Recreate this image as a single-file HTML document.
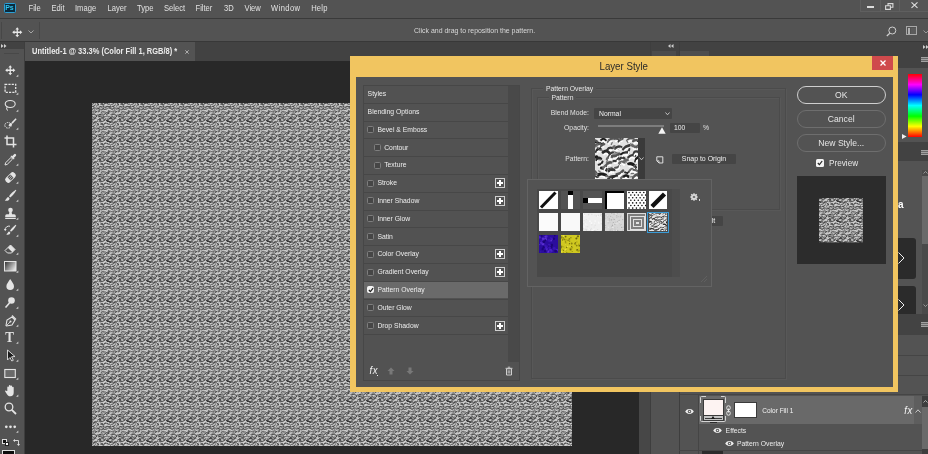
<!DOCTYPE html><html><head><meta charset="utf-8"><title>Layer Style</title><style>
*{box-sizing:border-box;margin:0;padding:0}
html,body{width:928px;height:454px;overflow:hidden;background:#282828}
body{position:relative;font-family:"Liberation Sans",sans-serif;font-size:7px;color:#dcdcdc;line-height:1}
.a{position:absolute}
.t{position:absolute;white-space:nowrap;line-height:10px;height:10px;transform:scaleY(1.12);transform-origin:50% 55%}
svg{position:absolute;overflow:visible}
.row{position:absolute;left:363px;width:145px;height:17px;background:#4f4f4f}
.cb{position:absolute;width:7px;height:7px;border:1px solid #7e7e7e;border-radius:1.5px;background:#464646}
.plus{position:absolute;left:495px;width:10px;height:10px;border:1px solid #cfcfcf}
.plus:before{content:"";position:absolute;left:1px;top:3px;width:6px;height:2px;background:#fff}
.plus:after{content:"";position:absolute;left:3px;top:1px;width:2px;height:6px;background:#fff}
.btn{position:absolute;left:796.5px;width:89.5px;height:18px;border-radius:9px;border:1px solid #6e6e6e;text-align:center;font-size:8.6px;line-height:16px;color:#e6e6e6}
.sw{position:absolute;width:18.5px;height:18px;background:#fff;overflow:hidden}
</style></head><body><div id="all" style="position:absolute;left:0;top:0;width:928px;height:454px;will-change:transform">
<svg width="0" height="0" style="left:0;top:0"><defs>
<filter id="soft" x="0" y="0" width="1" height="1"><feGaussianBlur stdDeviation="0.28"/></filter>
<g id="tile"><rect x="-1" y="-1" width="22" height="22" fill="#c6c6c6"/><path d="M-0.1 0.7Q0.9 1.4 1.9 0.7" stroke="#383838" stroke-width="0.9" fill="none" stroke-linecap="round"/><path d="M-0.1 20.7Q0.9 21.4 1.9 20.7" stroke="#383838" stroke-width="0.9" fill="none" stroke-linecap="round"/><path d="M19.9 0.7Q20.9 1.4 21.9 0.7" stroke="#383838" stroke-width="0.9" fill="none" stroke-linecap="round"/><path d="M19.9 20.7Q20.9 21.4 21.9 20.7" stroke="#383838" stroke-width="0.9" fill="none" stroke-linecap="round"/><path d="M-0.3 2.0Q0.4 2.6 1.1 2.0" stroke="#d6d6d6" stroke-width="0.8" fill="none" stroke-linecap="round"/><path d="M-0.3 22.0Q0.4 22.6 1.1 22.0" stroke="#d6d6d6" stroke-width="0.8" fill="none" stroke-linecap="round"/><path d="M19.7 2.0Q20.4 2.6 21.1 2.0" stroke="#d6d6d6" stroke-width="0.8" fill="none" stroke-linecap="round"/><path d="M19.7 22.0Q20.4 22.6 21.1 22.0" stroke="#d6d6d6" stroke-width="0.8" fill="none" stroke-linecap="round"/><path d="M1.5 3.9Q1.9 2.6 3.2 2.3" stroke="#383838" stroke-width="1.1" fill="none" stroke-linecap="round"/><path d="M1.5 23.9Q1.9 22.6 3.2 22.3" stroke="#383838" stroke-width="1.1" fill="none" stroke-linecap="round"/><path d="M21.5 3.9Q21.9 2.6 23.2 2.3" stroke="#383838" stroke-width="1.1" fill="none" stroke-linecap="round"/><path d="M21.5 23.9Q21.9 22.6 23.2 22.3" stroke="#383838" stroke-width="1.1" fill="none" stroke-linecap="round"/><path d="M1.3 4.9Q1.4 3.9 2.5 3.8" stroke="#d6d6d6" stroke-width="0.8" fill="none" stroke-linecap="round"/><path d="M21.3 4.9Q21.4 3.9 22.5 3.8" stroke="#d6d6d6" stroke-width="0.8" fill="none" stroke-linecap="round"/><path d="M0.4 6.3Q1.0 4.9 2.5 4.9" stroke="#444" stroke-width="1.1" fill="none" stroke-linecap="round"/><path d="M20.4 6.3Q21.0 4.9 22.5 4.9" stroke="#444" stroke-width="1.1" fill="none" stroke-linecap="round"/><path d="M0.7 7.3Q1.0 6.2 2.2 6.3" stroke="#d6d6d6" stroke-width="0.8" fill="none" stroke-linecap="round"/><path d="M20.7 7.3Q21.0 6.2 22.2 6.3" stroke="#d6d6d6" stroke-width="0.8" fill="none" stroke-linecap="round"/><path d="M1.8 8.3Q2.8 7.2 3.9 8.0" stroke="#3c3c3c" stroke-width="1.1" fill="none" stroke-linecap="round"/><path d="M21.8 8.3Q22.8 7.2 23.9 8.0" stroke="#3c3c3c" stroke-width="1.1" fill="none" stroke-linecap="round"/><path d="M2.1 9.5Q2.8 8.4 3.6 9.3" stroke="#d6d6d6" stroke-width="0.8" fill="none" stroke-linecap="round"/><path d="M22.1 9.5Q22.8 8.4 23.6 9.3" stroke="#d6d6d6" stroke-width="0.8" fill="none" stroke-linecap="round"/><path d="M-0.1 12.0Q1.1 10.9 2.8 11.3" stroke="#4e4e4e" stroke-width="1.2" fill="none" stroke-linecap="round"/><path d="M19.9 12.0Q21.1 10.9 22.8 11.3" stroke="#4e4e4e" stroke-width="1.2" fill="none" stroke-linecap="round"/><path d="M0.4 13.2Q1.2 12.1 2.4 12.7" stroke="#d6d6d6" stroke-width="0.8" fill="none" stroke-linecap="round"/><path d="M20.4 13.2Q21.2 12.1 22.4 12.7" stroke="#d6d6d6" stroke-width="0.8" fill="none" stroke-linecap="round"/><path d="M1.4 14.2Q2.6 13.6 3.7 14.4" stroke="#3c3c3c" stroke-width="0.9" fill="none" stroke-linecap="round"/><path d="M21.4 14.2Q22.6 13.6 23.7 14.4" stroke="#3c3c3c" stroke-width="0.9" fill="none" stroke-linecap="round"/><path d="M2.2 15.5Q3.1 14.9 3.8 15.7" stroke="#d6d6d6" stroke-width="0.8" fill="none" stroke-linecap="round"/><path d="M22.2 15.5Q23.1 14.9 23.8 15.7" stroke="#d6d6d6" stroke-width="0.8" fill="none" stroke-linecap="round"/><path d="M0.2 -2.1Q0.5 -3.6 2.0 -4.0" stroke="#4e4e4e" stroke-width="1.1" fill="none" stroke-linecap="round"/><path d="M0.2 17.9Q0.5 16.4 2.0 16.0" stroke="#4e4e4e" stroke-width="1.1" fill="none" stroke-linecap="round"/><path d="M20.2 -2.1Q20.5 -3.6 22.0 -4.0" stroke="#4e4e4e" stroke-width="1.1" fill="none" stroke-linecap="round"/><path d="M20.2 17.9Q20.5 16.4 22.0 16.0" stroke="#4e4e4e" stroke-width="1.1" fill="none" stroke-linecap="round"/><path d="M0.4 -1.2Q0.5 -2.4 1.7 -2.4" stroke="#d6d6d6" stroke-width="0.8" fill="none" stroke-linecap="round"/><path d="M0.4 18.8Q0.5 17.6 1.7 17.6" stroke="#d6d6d6" stroke-width="0.8" fill="none" stroke-linecap="round"/><path d="M20.4 -1.2Q20.5 -2.4 21.7 -2.4" stroke="#d6d6d6" stroke-width="0.8" fill="none" stroke-linecap="round"/><path d="M20.4 18.8Q20.5 17.6 21.7 17.6" stroke="#d6d6d6" stroke-width="0.8" fill="none" stroke-linecap="round"/><path d="M1.9 -0.3Q2.9 -1.7 4.5 -0.9" stroke="#3c3c3c" stroke-width="1.2" fill="none" stroke-linecap="round"/><path d="M1.9 19.7Q2.9 18.3 4.5 19.1" stroke="#3c3c3c" stroke-width="1.2" fill="none" stroke-linecap="round"/><path d="M21.9 -0.3Q22.9 -1.7 24.5 -0.9" stroke="#3c3c3c" stroke-width="1.2" fill="none" stroke-linecap="round"/><path d="M21.9 19.7Q22.9 18.3 24.5 19.1" stroke="#3c3c3c" stroke-width="1.2" fill="none" stroke-linecap="round"/><path d="M3.1 1.4Q4.0 -0.3 5.7 0.5" stroke="#3c3c3c" stroke-width="1.0" fill="none" stroke-linecap="round"/><path d="M3.1 21.4Q4.0 19.7 5.7 20.5" stroke="#3c3c3c" stroke-width="1.0" fill="none" stroke-linecap="round"/><path d="M3.1 2.5Q3.5 1.0 4.8 1.8" stroke="#d6d6d6" stroke-width="0.8" fill="none" stroke-linecap="round"/><path d="M3.1 22.5Q3.5 21.0 4.8 21.8" stroke="#d6d6d6" stroke-width="0.8" fill="none" stroke-linecap="round"/><path d="M4.5 3.8Q5.2 2.6 6.5 2.6" stroke="#585858" stroke-width="1.0" fill="none" stroke-linecap="round"/><path d="M4.5 23.8Q5.2 22.6 6.5 22.6" stroke="#585858" stroke-width="1.0" fill="none" stroke-linecap="round"/><path d="M4.5 4.9Q4.8 3.9 5.9 4.0" stroke="#d6d6d6" stroke-width="0.8" fill="none" stroke-linecap="round"/><path d="M2.1 6.2Q3.7 5.1 5.1 6.5" stroke="#585858" stroke-width="0.9" fill="none" stroke-linecap="round"/><path d="M22.1 6.2Q23.7 5.1 25.1 6.5" stroke="#585858" stroke-width="0.9" fill="none" stroke-linecap="round"/><path d="M2.7 7.5Q3.9 6.3 4.8 7.7" stroke="#d6d6d6" stroke-width="0.8" fill="none" stroke-linecap="round"/><path d="M22.7 7.5Q23.9 6.3 24.8 7.7" stroke="#d6d6d6" stroke-width="0.8" fill="none" stroke-linecap="round"/><path d="M3.1 9.9Q3.5 8.5 4.9 8.6" stroke="#444" stroke-width="1.1" fill="none" stroke-linecap="round"/><path d="M3.0 11.0Q3.1 9.8 4.3 10.0" stroke="#d6d6d6" stroke-width="0.8" fill="none" stroke-linecap="round"/><path d="M3.1 11.9Q4.4 13.2 5.9 11.9" stroke="#585858" stroke-width="1.2" fill="none" stroke-linecap="round"/><path d="M3.4 13.2Q4.3 14.4 5.3 13.2" stroke="#d6d6d6" stroke-width="0.8" fill="none" stroke-linecap="round"/><path d="M3.5 14.7Q3.5 13.3 4.9 13.2" stroke="#444" stroke-width="1.0" fill="none" stroke-linecap="round"/><path d="M3.2 15.7Q3.0 14.6 4.2 14.7" stroke="#d6d6d6" stroke-width="0.8" fill="none" stroke-linecap="round"/><path d="M2.2 16.0Q2.7 14.7 3.9 15.3" stroke="#444" stroke-width="1.1" fill="none" stroke-linecap="round"/><path d="M22.2 16.0Q22.7 14.7 23.9 15.3" stroke="#444" stroke-width="1.1" fill="none" stroke-linecap="round"/><path d="M4.3 -0.5Q4.6 -2.0 6.1 -2.1" stroke="#585858" stroke-width="0.9" fill="none" stroke-linecap="round"/><path d="M4.3 19.5Q4.6 18.0 6.1 17.9" stroke="#585858" stroke-width="0.9" fill="none" stroke-linecap="round"/><path d="M4.4 0.5Q4.4 -0.7 5.7 -0.6" stroke="#d6d6d6" stroke-width="0.8" fill="none" stroke-linecap="round"/><path d="M4.4 20.5Q4.4 19.3 5.7 19.4" stroke="#d6d6d6" stroke-width="0.8" fill="none" stroke-linecap="round"/><path d="M5.0 2.3Q6.3 2.4 6.5 1.1" stroke="#383838" stroke-width="1.1" fill="none" stroke-linecap="round"/><path d="M5.0 22.3Q6.3 22.4 6.5 21.1" stroke="#383838" stroke-width="1.1" fill="none" stroke-linecap="round"/><path d="M5.3 3.4Q6.3 3.7 6.3 2.6" stroke="#d6d6d6" stroke-width="0.8" fill="none" stroke-linecap="round"/><path d="M5.3 23.4Q6.3 23.7 6.3 22.6" stroke="#d6d6d6" stroke-width="0.8" fill="none" stroke-linecap="round"/><path d="M7.4 4.2Q8.5 3.1 9.6 4.4" stroke="#4e4e4e" stroke-width="1.2" fill="none" stroke-linecap="round"/><path d="M8.0 5.5Q8.8 4.3 9.5 5.6" stroke="#d6d6d6" stroke-width="0.8" fill="none" stroke-linecap="round"/><path d="M4.4 5.5Q6.2 4.7 7.4 6.2" stroke="#444" stroke-width="1.2" fill="none" stroke-linecap="round"/><path d="M4.9 6.8Q6.2 6.0 7.0 7.3" stroke="#d6d6d6" stroke-width="0.8" fill="none" stroke-linecap="round"/><path d="M6.5 8.9Q7.8 8.5 7.9 7.2" stroke="#4e4e4e" stroke-width="1.3" fill="none" stroke-linecap="round"/><path d="M7.1 9.9Q8.2 9.8 8.2 8.7" stroke="#d6d6d6" stroke-width="0.8" fill="none" stroke-linecap="round"/><path d="M6.2 12.3Q6.9 11.1 8.2 11.5" stroke="#444" stroke-width="1.0" fill="none" stroke-linecap="round"/><path d="M6.9 13.5Q7.3 12.3 8.3 12.9" stroke="#d6d6d6" stroke-width="0.8" fill="none" stroke-linecap="round"/><path d="M6.8 13.7Q8.2 12.5 9.6 13.7" stroke="#3c3c3c" stroke-width="1.3" fill="none" stroke-linecap="round"/><path d="M5.6 -2.9Q7.2 -3.3 7.9 -4.6" stroke="#4e4e4e" stroke-width="1.0" fill="none" stroke-linecap="round"/><path d="M5.6 17.1Q7.2 16.7 7.9 15.4" stroke="#4e4e4e" stroke-width="1.0" fill="none" stroke-linecap="round"/><path d="M6.4 -1.9Q7.6 -2.0 8.0 -3.1" stroke="#d6d6d6" stroke-width="0.8" fill="none" stroke-linecap="round"/><path d="M6.4 18.1Q7.6 18.0 8.0 16.9" stroke="#d6d6d6" stroke-width="0.8" fill="none" stroke-linecap="round"/><path d="M7.2 -1.1Q7.2 -2.6 8.7 -2.4" stroke="#585858" stroke-width="1.1" fill="none" stroke-linecap="round"/><path d="M7.2 18.9Q7.2 17.4 8.7 17.6" stroke="#585858" stroke-width="1.1" fill="none" stroke-linecap="round"/><path d="M7.4 -0.0Q7.2 -1.4 8.5 -1.0" stroke="#d6d6d6" stroke-width="0.8" fill="none" stroke-linecap="round"/><path d="M7.4 20.0Q7.2 18.6 8.5 19.0" stroke="#d6d6d6" stroke-width="0.8" fill="none" stroke-linecap="round"/><path d="M8.7 0.9Q9.5 -0.2 10.6 0.6" stroke="#3c3c3c" stroke-width="1.1" fill="none" stroke-linecap="round"/><path d="M8.7 20.9Q9.5 19.8 10.6 20.6" stroke="#3c3c3c" stroke-width="1.1" fill="none" stroke-linecap="round"/><path d="M9.7 3.9Q10.1 2.3 11.6 2.7" stroke="#444" stroke-width="1.0" fill="none" stroke-linecap="round"/><path d="M9.7 23.9Q10.1 22.3 11.6 22.7" stroke="#444" stroke-width="1.0" fill="none" stroke-linecap="round"/><path d="M9.6 5.0Q9.7 3.6 11.0 4.2" stroke="#d6d6d6" stroke-width="0.8" fill="none" stroke-linecap="round"/><path d="M8.3 6.4Q9.8 6.9 10.8 5.7" stroke="#383838" stroke-width="0.9" fill="none" stroke-linecap="round"/><path d="M8.7 7.5Q9.8 8.1 10.5 7.0" stroke="#d6d6d6" stroke-width="0.8" fill="none" stroke-linecap="round"/><path d="M9.3 9.2Q10.7 8.4 12.2 9.1" stroke="#444" stroke-width="1.1" fill="none" stroke-linecap="round"/><path d="M9.3 10.5Q10.3 9.7 11.3 10.4" stroke="#d6d6d6" stroke-width="0.8" fill="none" stroke-linecap="round"/><path d="M7.7 11.6Q9.0 10.7 10.5 11.0" stroke="#383838" stroke-width="1.0" fill="none" stroke-linecap="round"/><path d="M8.5 13.6Q9.9 14.7 11.5 14.1" stroke="#585858" stroke-width="1.1" fill="none" stroke-linecap="round"/><path d="M8.8 14.9Q9.7 15.9 10.8 15.3" stroke="#d6d6d6" stroke-width="0.8" fill="none" stroke-linecap="round"/><path d="M7.7 16.9Q8.5 15.5 9.8 16.5" stroke="#383838" stroke-width="1.3" fill="none" stroke-linecap="round"/><path d="M8.3 -1.0Q9.2 -1.9 10.5 -1.7" stroke="#4e4e4e" stroke-width="1.1" fill="none" stroke-linecap="round"/><path d="M8.3 19.0Q9.2 18.1 10.5 18.3" stroke="#4e4e4e" stroke-width="1.1" fill="none" stroke-linecap="round"/><path d="M8.4 0.2Q9.0 -0.7 10.0 -0.3" stroke="#d6d6d6" stroke-width="0.8" fill="none" stroke-linecap="round"/><path d="M8.4 20.2Q9.0 19.3 10.0 19.7" stroke="#d6d6d6" stroke-width="0.8" fill="none" stroke-linecap="round"/><path d="M9.3 1.1Q10.8 1.0 11.7 2.2" stroke="#4e4e4e" stroke-width="1.3" fill="none" stroke-linecap="round"/><path d="M9.3 21.1Q10.8 21.0 11.7 22.2" stroke="#4e4e4e" stroke-width="1.3" fill="none" stroke-linecap="round"/><path d="M10.1 2.5Q11.2 2.3 11.8 3.3" stroke="#d6d6d6" stroke-width="0.8" fill="none" stroke-linecap="round"/><path d="M10.1 22.5Q11.2 22.3 11.8 23.3" stroke="#d6d6d6" stroke-width="0.8" fill="none" stroke-linecap="round"/><path d="M11.0 3.1Q11.8 4.7 13.6 4.4" stroke="#444" stroke-width="1.0" fill="none" stroke-linecap="round"/><path d="M11.3 4.5Q11.6 5.9 13.1 5.5" stroke="#d6d6d6" stroke-width="0.8" fill="none" stroke-linecap="round"/><path d="M9.3 6.6Q10.8 6.8 11.5 5.5" stroke="#3c3c3c" stroke-width="1.1" fill="none" stroke-linecap="round"/><path d="M9.2 7.7Q10.4 8.1 10.8 6.9" stroke="#d6d6d6" stroke-width="0.8" fill="none" stroke-linecap="round"/><path d="M12.6 8.7Q13.8 8.5 14.4 9.6" stroke="#4e4e4e" stroke-width="1.0" fill="none" stroke-linecap="round"/><path d="M12.8 10.1Q13.7 9.7 14.0 10.7" stroke="#d6d6d6" stroke-width="0.8" fill="none" stroke-linecap="round"/><path d="M11.2 12.3Q12.6 12.6 13.0 11.2" stroke="#383838" stroke-width="1.0" fill="none" stroke-linecap="round"/><path d="M11.7 13.4Q12.9 13.8 13.0 12.6" stroke="#d6d6d6" stroke-width="0.8" fill="none" stroke-linecap="round"/><path d="M11.0 14.8Q11.3 13.3 12.7 13.9" stroke="#3c3c3c" stroke-width="1.1" fill="none" stroke-linecap="round"/><path d="M11.0 15.9Q11.1 14.6 12.2 15.3" stroke="#d6d6d6" stroke-width="0.8" fill="none" stroke-linecap="round"/><path d="M9.4 15.0Q11.0 14.6 11.6 16.1" stroke="#4e4e4e" stroke-width="1.1" fill="none" stroke-linecap="round"/><path d="M9.4 -3.6Q10.6 -4.1 10.8 -2.8" stroke="#d6d6d6" stroke-width="0.8" fill="none" stroke-linecap="round"/><path d="M9.4 16.4Q10.6 15.9 10.8 17.2" stroke="#d6d6d6" stroke-width="0.8" fill="none" stroke-linecap="round"/><path d="M10.9 -1.3Q11.3 -2.7 12.8 -2.6" stroke="#4e4e4e" stroke-width="1.0" fill="none" stroke-linecap="round"/><path d="M10.9 18.7Q11.3 17.3 12.8 17.4" stroke="#4e4e4e" stroke-width="1.0" fill="none" stroke-linecap="round"/><path d="M10.9 -0.2Q10.9 -1.5 12.1 -1.1" stroke="#d6d6d6" stroke-width="0.8" fill="none" stroke-linecap="round"/><path d="M10.9 19.8Q10.9 18.5 12.1 18.9" stroke="#d6d6d6" stroke-width="0.8" fill="none" stroke-linecap="round"/><path d="M12.6 1.0Q12.9 -0.3 14.3 0.0" stroke="#383838" stroke-width="1.1" fill="none" stroke-linecap="round"/><path d="M12.6 21.0Q12.9 19.7 14.3 20.0" stroke="#383838" stroke-width="1.1" fill="none" stroke-linecap="round"/><path d="M12.8 2.1Q12.9 0.9 14.0 1.4" stroke="#d6d6d6" stroke-width="0.8" fill="none" stroke-linecap="round"/><path d="M12.8 22.1Q12.9 20.9 14.0 21.4" stroke="#d6d6d6" stroke-width="0.8" fill="none" stroke-linecap="round"/><path d="M14.0 4.0Q15.3 2.7 16.6 4.0" stroke="#585858" stroke-width="1.2" fill="none" stroke-linecap="round"/><path d="M12.1 6.6Q13.6 5.5 14.8 6.9" stroke="#585858" stroke-width="1.2" fill="none" stroke-linecap="round"/><path d="M12.6 7.9Q13.7 6.7 14.5 8.1" stroke="#d6d6d6" stroke-width="0.8" fill="none" stroke-linecap="round"/><path d="M14.8 9.6Q16.6 9.5 16.7 7.7" stroke="#585858" stroke-width="1.3" fill="none" stroke-linecap="round"/><path d="M15.3 10.6Q16.8 10.7 16.6 9.2" stroke="#d6d6d6" stroke-width="0.8" fill="none" stroke-linecap="round"/><path d="M12.0 11.3Q13.5 11.9 13.7 10.3" stroke="#4e4e4e" stroke-width="1.0" fill="none" stroke-linecap="round"/><path d="M12.6 12.4Q13.9 13.1 13.8 11.7" stroke="#d6d6d6" stroke-width="0.8" fill="none" stroke-linecap="round"/><path d="M13.5 13.7Q14.0 12.4 15.3 12.9" stroke="#4e4e4e" stroke-width="1.0" fill="none" stroke-linecap="round"/><path d="M11.9 -2.4Q12.5 -3.7 13.9 -4.1" stroke="#585858" stroke-width="1.1" fill="none" stroke-linecap="round"/><path d="M11.9 17.6Q12.5 16.3 13.9 15.9" stroke="#585858" stroke-width="1.1" fill="none" stroke-linecap="round"/><path d="M12.7 -1.4Q13.0 -2.5 14.1 -2.6" stroke="#d6d6d6" stroke-width="0.8" fill="none" stroke-linecap="round"/><path d="M12.7 18.6Q13.0 17.5 14.1 17.4" stroke="#d6d6d6" stroke-width="0.8" fill="none" stroke-linecap="round"/><path d="M-5.6 -2.3Q-4.0 -2.6 -3.0 -1.3" stroke="#383838" stroke-width="1.2" fill="none" stroke-linecap="round"/><path d="M-5.6 17.7Q-4.0 17.4 -3.0 18.7" stroke="#383838" stroke-width="1.2" fill="none" stroke-linecap="round"/><path d="M14.4 -2.3Q16.0 -2.6 17.0 -1.3" stroke="#383838" stroke-width="1.2" fill="none" stroke-linecap="round"/><path d="M14.4 17.7Q16.0 17.4 17.0 18.7" stroke="#383838" stroke-width="1.2" fill="none" stroke-linecap="round"/><path d="M14.6 -0.9Q15.8 -1.3 16.4 -0.2" stroke="#d6d6d6" stroke-width="0.8" fill="none" stroke-linecap="round"/><path d="M14.6 19.1Q15.8 18.7 16.4 19.8" stroke="#d6d6d6" stroke-width="0.8" fill="none" stroke-linecap="round"/><path d="M-4.8 0.4Q-3.8 1.7 -2.2 1.1" stroke="#383838" stroke-width="1.2" fill="none" stroke-linecap="round"/><path d="M-4.8 20.4Q-3.8 21.7 -2.2 21.1" stroke="#383838" stroke-width="1.2" fill="none" stroke-linecap="round"/><path d="M15.2 0.4Q16.2 1.7 17.8 1.1" stroke="#383838" stroke-width="1.2" fill="none" stroke-linecap="round"/><path d="M15.2 20.4Q16.2 21.7 17.8 21.1" stroke="#383838" stroke-width="1.2" fill="none" stroke-linecap="round"/><path d="M-4.0 1.7Q-3.4 3.0 -2.2 2.2" stroke="#d6d6d6" stroke-width="0.8" fill="none" stroke-linecap="round"/><path d="M-4.0 21.7Q-3.4 23.0 -2.2 22.2" stroke="#d6d6d6" stroke-width="0.8" fill="none" stroke-linecap="round"/><path d="M16.0 1.7Q16.6 3.0 17.8 2.2" stroke="#d6d6d6" stroke-width="0.8" fill="none" stroke-linecap="round"/><path d="M16.0 21.7Q16.6 23.0 17.8 22.2" stroke="#d6d6d6" stroke-width="0.8" fill="none" stroke-linecap="round"/><path d="M-2.9 3.6Q-2.3 5.0 -1.1 4.1" stroke="#383838" stroke-width="1.2" fill="none" stroke-linecap="round"/><path d="M17.1 3.6Q17.7 5.0 18.9 4.1" stroke="#383838" stroke-width="1.2" fill="none" stroke-linecap="round"/><path d="M-2.9 4.9Q-2.5 6.2 -1.6 5.3" stroke="#d6d6d6" stroke-width="0.8" fill="none" stroke-linecap="round"/><path d="M17.1 4.9Q17.5 6.2 18.4 5.3" stroke="#d6d6d6" stroke-width="0.8" fill="none" stroke-linecap="round"/><path d="M14.4 6.1Q15.7 6.6 16.2 5.3" stroke="#585858" stroke-width="0.9" fill="none" stroke-linecap="round"/><path d="M14.4 7.2Q15.4 7.9 15.7 6.7" stroke="#d6d6d6" stroke-width="0.8" fill="none" stroke-linecap="round"/><path d="M-4.0 9.8Q-2.5 9.1 -1.9 7.6" stroke="#383838" stroke-width="0.9" fill="none" stroke-linecap="round"/><path d="M16.0 9.8Q17.5 9.1 18.1 7.6" stroke="#383838" stroke-width="0.9" fill="none" stroke-linecap="round"/><path d="M14.6 11.3Q16.1 11.3 17.0 9.9" stroke="#444" stroke-width="1.3" fill="none" stroke-linecap="round"/><path d="M14.8 12.4Q16.0 12.5 16.5 11.4" stroke="#d6d6d6" stroke-width="0.8" fill="none" stroke-linecap="round"/><path d="M-3.8 13.8Q-2.4 13.4 -1.2 14.3" stroke="#444" stroke-width="1.0" fill="none" stroke-linecap="round"/><path d="M16.2 13.8Q17.6 13.4 18.8 14.3" stroke="#444" stroke-width="1.0" fill="none" stroke-linecap="round"/><path d="M-3.3 15.1Q-2.2 14.6 -1.4 15.4" stroke="#d6d6d6" stroke-width="0.8" fill="none" stroke-linecap="round"/><path d="M16.7 15.1Q17.8 14.6 18.6 15.4" stroke="#d6d6d6" stroke-width="0.8" fill="none" stroke-linecap="round"/><path d="M-4.7 16.0Q-3.3 16.8 -2.3 15.4" stroke="#3c3c3c" stroke-width="1.1" fill="none" stroke-linecap="round"/><path d="M15.3 16.0Q16.7 16.8 17.7 15.4" stroke="#3c3c3c" stroke-width="1.1" fill="none" stroke-linecap="round"/><path d="M-4.5 -1.6Q-2.8 -2.0 -1.4 -1.0" stroke="#383838" stroke-width="1.3" fill="none" stroke-linecap="round"/><path d="M-4.5 18.4Q-2.8 18.0 -1.4 19.0" stroke="#383838" stroke-width="1.3" fill="none" stroke-linecap="round"/><path d="M15.5 -1.6Q17.2 -2.0 18.6 -1.0" stroke="#383838" stroke-width="1.3" fill="none" stroke-linecap="round"/><path d="M15.5 18.4Q17.2 18.0 18.6 19.0" stroke="#383838" stroke-width="1.3" fill="none" stroke-linecap="round"/><path d="M-4.0 -0.2Q-2.8 -0.8 -1.9 0.1" stroke="#d6d6d6" stroke-width="0.8" fill="none" stroke-linecap="round"/><path d="M-4.0 19.8Q-2.8 19.2 -1.9 20.1" stroke="#d6d6d6" stroke-width="0.8" fill="none" stroke-linecap="round"/><path d="M16.0 -0.2Q17.2 -0.8 18.1 0.1" stroke="#d6d6d6" stroke-width="0.8" fill="none" stroke-linecap="round"/><path d="M16.0 19.8Q17.2 19.2 18.1 20.1" stroke="#d6d6d6" stroke-width="0.8" fill="none" stroke-linecap="round"/><path d="M-1.7 2.2Q-0.9 0.8 0.5 1.7" stroke="#444" stroke-width="0.9" fill="none" stroke-linecap="round"/><path d="M-1.7 22.2Q-0.9 20.8 0.5 21.7" stroke="#444" stroke-width="0.9" fill="none" stroke-linecap="round"/><path d="M18.3 2.2Q19.1 0.8 20.5 1.7" stroke="#444" stroke-width="0.9" fill="none" stroke-linecap="round"/><path d="M18.3 22.2Q19.1 20.8 20.5 21.7" stroke="#444" stroke-width="0.9" fill="none" stroke-linecap="round"/><path d="M-1.1 3.4Q-0.7 2.0 0.4 3.0" stroke="#d6d6d6" stroke-width="0.8" fill="none" stroke-linecap="round"/><path d="M-1.1 23.4Q-0.7 22.0 0.4 23.0" stroke="#d6d6d6" stroke-width="0.8" fill="none" stroke-linecap="round"/><path d="M18.9 3.4Q19.3 2.0 20.4 3.0" stroke="#d6d6d6" stroke-width="0.8" fill="none" stroke-linecap="round"/><path d="M18.9 23.4Q19.3 22.0 20.4 23.0" stroke="#d6d6d6" stroke-width="0.8" fill="none" stroke-linecap="round"/><path d="M-1.8 3.6Q-0.4 4.8 0.9 3.5" stroke="#4e4e4e" stroke-width="1.0" fill="none" stroke-linecap="round"/><path d="M18.2 3.6Q19.6 4.8 20.9 3.5" stroke="#4e4e4e" stroke-width="1.0" fill="none" stroke-linecap="round"/><path d="M-1.0 4.8Q-0.0 6.0 0.8 4.7" stroke="#d6d6d6" stroke-width="0.8" fill="none" stroke-linecap="round"/><path d="M19.0 4.8Q20.0 6.0 20.8 4.7" stroke="#d6d6d6" stroke-width="0.8" fill="none" stroke-linecap="round"/><path d="M-2.7 5.2Q-1.1 5.0 -0.2 6.3" stroke="#585858" stroke-width="1.1" fill="none" stroke-linecap="round"/><path d="M17.3 5.2Q18.9 5.0 19.8 6.3" stroke="#585858" stroke-width="1.1" fill="none" stroke-linecap="round"/><path d="M-2.7 6.6Q-1.5 6.3 -1.0 7.4" stroke="#d6d6d6" stroke-width="0.8" fill="none" stroke-linecap="round"/><path d="M17.3 6.6Q18.5 6.3 19.0 7.4" stroke="#d6d6d6" stroke-width="0.8" fill="none" stroke-linecap="round"/><path d="M-1.4 9.0Q0.1 9.5 0.7 8.0" stroke="#444" stroke-width="1.0" fill="none" stroke-linecap="round"/><path d="M18.6 9.0Q20.1 9.5 20.7 8.0" stroke="#444" stroke-width="1.0" fill="none" stroke-linecap="round"/><path d="M-1.2 10.1Q0.0 10.7 0.3 9.4" stroke="#d6d6d6" stroke-width="0.8" fill="none" stroke-linecap="round"/><path d="M18.8 10.1Q20.0 10.7 20.3 9.4" stroke="#d6d6d6" stroke-width="0.8" fill="none" stroke-linecap="round"/><path d="M-1.4 11.8Q-0.7 10.3 0.9 10.9" stroke="#4e4e4e" stroke-width="0.9" fill="none" stroke-linecap="round"/><path d="M18.6 11.8Q19.3 10.3 20.9 10.9" stroke="#4e4e4e" stroke-width="0.9" fill="none" stroke-linecap="round"/><path d="M-1.4 15.0Q-0.9 13.7 0.5 13.8" stroke="#383838" stroke-width="1.2" fill="none" stroke-linecap="round"/><path d="M18.6 15.0Q19.1 13.7 20.5 13.8" stroke="#383838" stroke-width="1.2" fill="none" stroke-linecap="round"/><path d="M-1.6 16.1Q-1.3 15.0 -0.2 15.2" stroke="#d6d6d6" stroke-width="0.8" fill="none" stroke-linecap="round"/><path d="M18.4 16.1Q18.7 15.0 19.8 15.2" stroke="#d6d6d6" stroke-width="0.8" fill="none" stroke-linecap="round"/><path d="M-1.9 15.7Q-0.4 15.1 0.5 16.5" stroke="#444" stroke-width="1.3" fill="none" stroke-linecap="round"/><path d="M18.1 15.7Q19.6 15.1 20.5 16.5" stroke="#444" stroke-width="1.3" fill="none" stroke-linecap="round"/><path d="M-1.5 -2.9Q-0.3 -3.7 0.2 -2.4" stroke="#d6d6d6" stroke-width="0.8" fill="none" stroke-linecap="round"/><path d="M-1.5 17.1Q-0.3 16.3 0.2 17.6" stroke="#d6d6d6" stroke-width="0.8" fill="none" stroke-linecap="round"/><path d="M18.5 -2.9Q19.7 -3.7 20.2 -2.4" stroke="#d6d6d6" stroke-width="0.8" fill="none" stroke-linecap="round"/><path d="M18.5 17.1Q19.7 16.3 20.2 17.6" stroke="#d6d6d6" stroke-width="0.8" fill="none" stroke-linecap="round"/><path d="M-2.2 -0.4Q-0.9 -1.4 0.7 -1.0" stroke="#383838" stroke-width="1.1" fill="none" stroke-linecap="round"/><path d="M-2.2 19.6Q-0.9 18.6 0.7 19.0" stroke="#383838" stroke-width="1.1" fill="none" stroke-linecap="round"/><path d="M17.8 -0.4Q19.1 -1.4 20.7 -1.0" stroke="#383838" stroke-width="1.1" fill="none" stroke-linecap="round"/><path d="M17.8 19.6Q19.1 18.6 20.7 19.0" stroke="#383838" stroke-width="1.1" fill="none" stroke-linecap="round"/><path d="M-2.0 0.8Q-1.1 -0.1 0.1 0.3" stroke="#d6d6d6" stroke-width="0.8" fill="none" stroke-linecap="round"/><path d="M-2.0 20.8Q-1.1 19.9 0.1 20.3" stroke="#d6d6d6" stroke-width="0.8" fill="none" stroke-linecap="round"/><path d="M18.0 0.8Q18.9 -0.1 20.1 0.3" stroke="#d6d6d6" stroke-width="0.8" fill="none" stroke-linecap="round"/><path d="M18.0 20.8Q18.9 19.9 20.1 20.3" stroke="#d6d6d6" stroke-width="0.8" fill="none" stroke-linecap="round"/><path d="M14.1 13.2Q14.7 12.6 15.5 12.9" stroke="#808080" stroke-width="1.1" fill="none" stroke-linecap="round"/><path d="M9.1 14.2Q9.3 13.1 10.3 12.6" stroke="#808080" stroke-width="1.1" fill="none" stroke-linecap="round"/><path d="M0.8 9.4Q1.8 9.6 2.2 10.6" stroke="#808080" stroke-width="1.1" fill="none" stroke-linecap="round"/><path d="M20.8 9.4Q21.8 9.6 22.2 10.6" stroke="#808080" stroke-width="1.1" fill="none" stroke-linecap="round"/><path d="M8.4 6.2Q9.4 6.3 9.8 7.2" stroke="#808080" stroke-width="1.1" fill="none" stroke-linecap="round"/><path d="M10.3 5.5Q10.6 4.5 11.6 4.2" stroke="#808080" stroke-width="1.1" fill="none" stroke-linecap="round"/><path d="M5.9 6.9Q6.7 7.0 6.9 7.9" stroke="#808080" stroke-width="1.1" fill="none" stroke-linecap="round"/><path d="M-0.6 -2.3Q0.3 -3.1 1.4 -2.9" stroke="#808080" stroke-width="1.1" fill="none" stroke-linecap="round"/><path d="M-0.6 17.7Q0.3 16.9 1.4 17.1" stroke="#808080" stroke-width="1.1" fill="none" stroke-linecap="round"/><path d="M19.4 -2.3Q20.3 -3.1 21.4 -2.9" stroke="#808080" stroke-width="1.1" fill="none" stroke-linecap="round"/><path d="M19.4 17.7Q20.3 16.9 21.4 17.1" stroke="#808080" stroke-width="1.1" fill="none" stroke-linecap="round"/><path d="M3.5 4.9Q4.5 5.0 4.9 5.9" stroke="#808080" stroke-width="1.1" fill="none" stroke-linecap="round"/></g>
<g id="swt"><rect width="44" height="42" fill="#e2e2e2"/><path d="M-42.8 3.3Q-39.8 6.8 -35.7 4.9" stroke="#1c1c1c" stroke-width="2.7" fill="none" stroke-linecap="round"/><path d="M0.2 3.3Q3.2 6.8 7.3 4.9" stroke="#1c1c1c" stroke-width="2.7" fill="none" stroke-linecap="round"/><path d="M43.2 3.3Q46.2 6.8 50.3 4.9" stroke="#1c1c1c" stroke-width="2.7" fill="none" stroke-linecap="round"/><path d="M1.3 6.0Q3.2 9.2 6.2 7.1" stroke="#fff" stroke-width="1.4" fill="none" stroke-linecap="round"/><path d="M-36.9 9.4Q-36.9 6.3 -33.8 6.0" stroke="#555" stroke-width="2.4" fill="none" stroke-linecap="round"/><path d="M6.1 9.4Q6.1 6.3 9.2 6.0" stroke="#555" stroke-width="2.4" fill="none" stroke-linecap="round"/><path d="M49.1 9.4Q49.1 6.3 52.2 6.0" stroke="#555" stroke-width="2.4" fill="none" stroke-linecap="round"/><path d="M6.6 11.3Q6.1 8.7 8.7 8.9" stroke="#fff" stroke-width="1.4" fill="none" stroke-linecap="round"/><path d="M-41.6 13.9Q-41.2 10.0 -37.5 11.1" stroke="#2a2a2a" stroke-width="2.6" fill="none" stroke-linecap="round"/><path d="M1.4 13.9Q1.8 10.0 5.5 11.1" stroke="#2a2a2a" stroke-width="2.6" fill="none" stroke-linecap="round"/><path d="M44.4 13.9Q44.8 10.0 48.5 11.1" stroke="#2a2a2a" stroke-width="2.6" fill="none" stroke-linecap="round"/><path d="M2.0 15.9Q1.8 12.4 4.9 13.9" stroke="#fff" stroke-width="1.4" fill="none" stroke-linecap="round"/><path d="M-41.4 21.9Q-40.1 18.3 -37.1 20.7" stroke="#2a2a2a" stroke-width="2.6" fill="none" stroke-linecap="round"/><path d="M1.6 21.9Q2.9 18.3 5.9 20.7" stroke="#2a2a2a" stroke-width="2.6" fill="none" stroke-linecap="round"/><path d="M44.6 21.9Q45.9 18.3 48.9 20.7" stroke="#2a2a2a" stroke-width="2.6" fill="none" stroke-linecap="round"/><path d="M2.3 24.1Q2.9 20.7 5.3 23.3" stroke="#fff" stroke-width="1.4" fill="none" stroke-linecap="round"/><path d="M-39.4 26.7Q-36.2 26.5 -35.4 23.5" stroke="#2a2a2a" stroke-width="1.9" fill="none" stroke-linecap="round"/><path d="M3.6 26.7Q6.8 26.5 7.6 23.5" stroke="#2a2a2a" stroke-width="1.9" fill="none" stroke-linecap="round"/><path d="M46.6 26.7Q49.8 26.5 50.6 23.5" stroke="#2a2a2a" stroke-width="1.9" fill="none" stroke-linecap="round"/><path d="M4.2 28.6Q6.8 28.9 7.0 26.4" stroke="#fff" stroke-width="1.4" fill="none" stroke-linecap="round"/><path d="M-36.7 30.0Q-33.6 29.8 -31.9 32.3" stroke="#2a2a2a" stroke-width="2.8" fill="none" stroke-linecap="round"/><path d="M6.3 30.0Q9.4 29.8 11.1 32.3" stroke="#2a2a2a" stroke-width="2.8" fill="none" stroke-linecap="round"/><path d="M49.3 30.0Q52.4 29.8 54.1 32.3" stroke="#2a2a2a" stroke-width="2.8" fill="none" stroke-linecap="round"/><path d="M7.1 32.8Q9.4 32.2 10.4 34.4" stroke="#fff" stroke-width="1.4" fill="none" stroke-linecap="round"/><path d="M-44.2 37.0Q-41.8 40.2 -38.3 38.5" stroke="#3a3a3a" stroke-width="1.8" fill="none" stroke-linecap="round"/><path d="M-1.2 37.0Q1.2 40.2 4.7 38.5" stroke="#3a3a3a" stroke-width="1.8" fill="none" stroke-linecap="round"/><path d="M41.8 37.0Q44.2 40.2 47.7 38.5" stroke="#3a3a3a" stroke-width="1.8" fill="none" stroke-linecap="round"/><path d="M-0.3 39.6Q1.2 42.6 3.8 40.7" stroke="#fff" stroke-width="1.4" fill="none" stroke-linecap="round"/><path d="M-36.9 1.9Q-34.4 -0.3 -32.3 2.2" stroke="#1c1c1c" stroke-width="2.0" fill="none" stroke-linecap="round"/><path d="M6.1 1.9Q8.6 -0.3 10.7 2.2" stroke="#1c1c1c" stroke-width="2.0" fill="none" stroke-linecap="round"/><path d="M49.1 1.9Q51.6 -0.3 53.7 2.2" stroke="#1c1c1c" stroke-width="2.0" fill="none" stroke-linecap="round"/><path d="M6.8 4.3Q8.6 2.1 10.0 4.6" stroke="#fff" stroke-width="1.4" fill="none" stroke-linecap="round"/><path d="M-30.8 12.1Q-29.2 8.8 -25.8 10.0" stroke="#3a3a3a" stroke-width="2.2" fill="none" stroke-linecap="round"/><path d="M12.2 12.1Q13.8 8.8 17.2 10.0" stroke="#3a3a3a" stroke-width="2.2" fill="none" stroke-linecap="round"/><path d="M55.2 12.1Q56.8 8.8 60.2 10.0" stroke="#3a3a3a" stroke-width="2.2" fill="none" stroke-linecap="round"/><path d="M13.0 14.2Q13.8 11.2 16.5 12.7" stroke="#fff" stroke-width="1.4" fill="none" stroke-linecap="round"/><path d="M-35.0 14.3Q-31.6 11.5 -28.8 14.9" stroke="#2a2a2a" stroke-width="2.8" fill="none" stroke-linecap="round"/><path d="M8.0 14.3Q11.4 11.5 14.2 14.9" stroke="#2a2a2a" stroke-width="2.8" fill="none" stroke-linecap="round"/><path d="M51.0 14.3Q54.4 11.5 57.2 14.9" stroke="#2a2a2a" stroke-width="2.8" fill="none" stroke-linecap="round"/><path d="M8.9 16.8Q11.4 13.9 13.3 17.2" stroke="#fff" stroke-width="1.4" fill="none" stroke-linecap="round"/><path d="M-31.0 21.2Q-29.4 17.4 -25.6 18.9" stroke="#666" stroke-width="2.6" fill="none" stroke-linecap="round"/><path d="M12.0 21.2Q13.6 17.4 17.4 18.9" stroke="#666" stroke-width="2.6" fill="none" stroke-linecap="round"/><path d="M55.0 21.2Q56.6 17.4 60.4 18.9" stroke="#666" stroke-width="2.6" fill="none" stroke-linecap="round"/><path d="M12.9 23.2Q13.6 19.8 16.6 21.6" stroke="#fff" stroke-width="1.4" fill="none" stroke-linecap="round"/><path d="M-34.6 31.1Q-33.4 27.3 -29.7 25.6" stroke="#666" stroke-width="2.4" fill="none" stroke-linecap="round"/><path d="M8.4 31.1Q9.6 27.3 13.3 25.6" stroke="#666" stroke-width="2.4" fill="none" stroke-linecap="round"/><path d="M51.4 31.1Q52.6 27.3 56.3 25.6" stroke="#666" stroke-width="2.4" fill="none" stroke-linecap="round"/><path d="M9.2 32.7Q9.6 29.7 12.5 28.9" stroke="#fff" stroke-width="1.4" fill="none" stroke-linecap="round"/><path d="M-31.1 30.7Q-27.6 30.0 -25.7 33.0" stroke="#3a3a3a" stroke-width="1.9" fill="none" stroke-linecap="round"/><path d="M11.9 30.7Q15.4 30.0 17.3 33.0" stroke="#3a3a3a" stroke-width="1.9" fill="none" stroke-linecap="round"/><path d="M54.9 30.7Q58.4 30.0 60.3 33.0" stroke="#3a3a3a" stroke-width="1.9" fill="none" stroke-linecap="round"/><path d="M12.7 33.5Q15.4 32.4 16.5 35.0" stroke="#fff" stroke-width="1.4" fill="none" stroke-linecap="round"/><path d="M-39.9 36.6Q-36.0 35.1 -32.4 37.1" stroke="#1c1c1c" stroke-width="2.9" fill="none" stroke-linecap="round"/><path d="M3.1 36.6Q7.0 35.1 10.6 37.1" stroke="#1c1c1c" stroke-width="2.9" fill="none" stroke-linecap="round"/><path d="M46.1 36.6Q50.0 35.1 53.6 37.1" stroke="#1c1c1c" stroke-width="2.9" fill="none" stroke-linecap="round"/><path d="M4.3 39.1Q7.0 37.5 9.5 39.4" stroke="#fff" stroke-width="1.4" fill="none" stroke-linecap="round"/><path d="M-30.0 4.2Q-29.0 0.1 -24.9 0.9" stroke="#555" stroke-width="1.9" fill="none" stroke-linecap="round"/><path d="M13.0 4.2Q14.0 0.1 18.1 0.9" stroke="#555" stroke-width="1.9" fill="none" stroke-linecap="round"/><path d="M56.0 4.2Q57.0 0.1 61.1 0.9" stroke="#555" stroke-width="1.9" fill="none" stroke-linecap="round"/><path d="M13.7 6.1Q14.0 2.5 17.3 3.8" stroke="#fff" stroke-width="1.4" fill="none" stroke-linecap="round"/><path d="M-24.4 9.0Q-22.3 11.4 -19.4 10.1" stroke="#666" stroke-width="2.8" fill="none" stroke-linecap="round"/><path d="M18.6 9.0Q20.7 11.4 23.6 10.1" stroke="#666" stroke-width="2.8" fill="none" stroke-linecap="round"/><path d="M61.6 9.0Q63.7 11.4 66.6 10.1" stroke="#666" stroke-width="2.8" fill="none" stroke-linecap="round"/><path d="M19.3 11.5Q20.7 13.8 22.8 12.3" stroke="#fff" stroke-width="1.4" fill="none" stroke-linecap="round"/><path d="M-28.9 18.1Q-28.1 14.9 -24.9 14.3" stroke="#3a3a3a" stroke-width="1.9" fill="none" stroke-linecap="round"/><path d="M14.1 18.1Q14.9 14.9 18.1 14.3" stroke="#3a3a3a" stroke-width="1.9" fill="none" stroke-linecap="round"/><path d="M57.1 18.1Q57.9 14.9 61.1 14.3" stroke="#3a3a3a" stroke-width="1.9" fill="none" stroke-linecap="round"/><path d="M14.7 19.9Q14.9 17.3 17.5 17.3" stroke="#fff" stroke-width="1.4" fill="none" stroke-linecap="round"/><path d="M-24.5 23.1Q-20.3 23.8 -19.9 19.5" stroke="#3a3a3a" stroke-width="2.3" fill="none" stroke-linecap="round"/><path d="M18.5 23.1Q22.7 23.8 23.1 19.5" stroke="#3a3a3a" stroke-width="2.3" fill="none" stroke-linecap="round"/><path d="M61.5 23.1Q65.7 23.8 66.1 19.5" stroke="#3a3a3a" stroke-width="2.3" fill="none" stroke-linecap="round"/><path d="M19.2 25.0Q22.7 26.2 22.4 22.5" stroke="#fff" stroke-width="1.4" fill="none" stroke-linecap="round"/><path d="M-30.8 27.9Q-30.8 23.8 -26.8 24.5" stroke="#555" stroke-width="2.7" fill="none" stroke-linecap="round"/><path d="M12.2 27.9Q12.2 23.8 16.2 24.5" stroke="#555" stroke-width="2.7" fill="none" stroke-linecap="round"/><path d="M55.2 27.9Q55.2 23.8 59.2 24.5" stroke="#555" stroke-width="2.7" fill="none" stroke-linecap="round"/><path d="M12.8 29.8Q12.2 26.2 15.6 27.4" stroke="#fff" stroke-width="1.4" fill="none" stroke-linecap="round"/><path d="M-29.3 33.1Q-26.8 30.3 -23.4 32.0" stroke="#3a3a3a" stroke-width="2.5" fill="none" stroke-linecap="round"/><path d="M13.7 33.1Q16.2 30.3 19.6 32.0" stroke="#3a3a3a" stroke-width="2.5" fill="none" stroke-linecap="round"/><path d="M56.7 33.1Q59.2 30.3 62.6 32.0" stroke="#3a3a3a" stroke-width="2.5" fill="none" stroke-linecap="round"/><path d="M14.6 35.3Q16.2 32.7 18.7 34.6" stroke="#fff" stroke-width="1.4" fill="none" stroke-linecap="round"/><path d="M-29.7 41.0Q-27.5 37.9 -23.7 38.5" stroke="#3a3a3a" stroke-width="2.6" fill="none" stroke-linecap="round"/><path d="M13.3 41.0Q15.5 37.9 19.3 38.5" stroke="#3a3a3a" stroke-width="2.6" fill="none" stroke-linecap="round"/><path d="M56.3 41.0Q58.5 37.9 62.3 38.5" stroke="#3a3a3a" stroke-width="2.6" fill="none" stroke-linecap="round"/><path d="M14.2 43.0Q15.5 40.3 18.4 41.3" stroke="#fff" stroke-width="1.4" fill="none" stroke-linecap="round"/><path d="M-23.3 0.7Q-19.4 -0.3 -17.6 3.3" stroke="#555" stroke-width="2.4" fill="none" stroke-linecap="round"/><path d="M19.7 0.7Q23.6 -0.3 25.4 3.3" stroke="#555" stroke-width="2.4" fill="none" stroke-linecap="round"/><path d="M62.7 0.7Q66.6 -0.3 68.4 3.3" stroke="#555" stroke-width="2.4" fill="none" stroke-linecap="round"/><path d="M20.6 3.5Q23.6 2.1 24.6 5.3" stroke="#fff" stroke-width="1.4" fill="none" stroke-linecap="round"/><path d="M-23.1 10.6Q-20.5 7.2 -16.5 8.9" stroke="#3a3a3a" stroke-width="2.0" fill="none" stroke-linecap="round"/><path d="M19.9 10.6Q22.5 7.2 26.5 8.9" stroke="#3a3a3a" stroke-width="2.0" fill="none" stroke-linecap="round"/><path d="M62.9 10.6Q65.5 7.2 69.5 8.9" stroke="#3a3a3a" stroke-width="2.0" fill="none" stroke-linecap="round"/><path d="M20.9 12.7Q22.5 9.6 25.5 11.5" stroke="#fff" stroke-width="1.4" fill="none" stroke-linecap="round"/><path d="M-25.8 18.1Q-21.8 18.6 -18.9 15.7" stroke="#555" stroke-width="2.9" fill="none" stroke-linecap="round"/><path d="M17.2 18.1Q21.2 18.6 24.1 15.7" stroke="#555" stroke-width="2.9" fill="none" stroke-linecap="round"/><path d="M60.2 18.1Q64.2 18.6 67.1 15.7" stroke="#555" stroke-width="2.9" fill="none" stroke-linecap="round"/><path d="M18.3 20.1Q21.2 21.0 23.0 18.5" stroke="#fff" stroke-width="1.4" fill="none" stroke-linecap="round"/><path d="M-18.2 21.2Q-16.4 18.0 -13.6 20.5" stroke="#3a3a3a" stroke-width="2.5" fill="none" stroke-linecap="round"/><path d="M24.8 21.2Q26.6 18.0 29.4 20.5" stroke="#3a3a3a" stroke-width="2.5" fill="none" stroke-linecap="round"/><path d="M67.8 21.2Q69.6 18.0 72.4 20.5" stroke="#3a3a3a" stroke-width="2.5" fill="none" stroke-linecap="round"/><path d="M25.5 23.5Q26.6 20.4 28.7 23.0" stroke="#fff" stroke-width="1.4" fill="none" stroke-linecap="round"/><path d="M-22.9 29.8Q-18.8 29.7 -17.6 25.7" stroke="#555" stroke-width="2.1" fill="none" stroke-linecap="round"/><path d="M20.1 29.8Q24.2 29.7 25.4 25.7" stroke="#555" stroke-width="2.1" fill="none" stroke-linecap="round"/><path d="M63.1 29.8Q67.2 29.7 68.4 25.7" stroke="#555" stroke-width="2.1" fill="none" stroke-linecap="round"/><path d="M20.9 31.6Q24.2 32.1 24.6 28.7" stroke="#fff" stroke-width="1.4" fill="none" stroke-linecap="round"/><path d="M-21.4 36.2Q-17.2 35.9 -14.9 32.5" stroke="#555" stroke-width="2.4" fill="none" stroke-linecap="round"/><path d="M21.6 36.2Q25.8 35.9 28.1 32.5" stroke="#555" stroke-width="2.4" fill="none" stroke-linecap="round"/><path d="M64.6 36.2Q68.8 35.9 71.1 32.5" stroke="#555" stroke-width="2.4" fill="none" stroke-linecap="round"/><path d="M22.6 38.1Q25.8 38.3 27.1 35.4" stroke="#fff" stroke-width="1.4" fill="none" stroke-linecap="round"/><path d="M-25.9 41.7Q-25.2 37.2 -20.7 37.8" stroke="#2a2a2a" stroke-width="1.8" fill="none" stroke-linecap="round"/><path d="M17.1 41.7Q17.8 37.2 22.3 37.8" stroke="#2a2a2a" stroke-width="1.8" fill="none" stroke-linecap="round"/><path d="M60.1 41.7Q60.8 37.2 65.3 37.8" stroke="#2a2a2a" stroke-width="1.8" fill="none" stroke-linecap="round"/><path d="M17.9 43.5Q17.8 39.6 21.6 40.8" stroke="#fff" stroke-width="1.4" fill="none" stroke-linecap="round"/><path d="M-19.3 3.5Q-18.3 0.9 -15.5 0.7" stroke="#3a3a3a" stroke-width="2.2" fill="none" stroke-linecap="round"/><path d="M23.7 3.5Q24.7 0.9 27.5 0.7" stroke="#3a3a3a" stroke-width="2.2" fill="none" stroke-linecap="round"/><path d="M66.7 3.5Q67.7 0.9 70.5 0.7" stroke="#3a3a3a" stroke-width="2.2" fill="none" stroke-linecap="round"/><path d="M24.3 5.5Q24.7 3.3 26.9 3.5" stroke="#fff" stroke-width="1.4" fill="none" stroke-linecap="round"/><path d="M-14.7 11.2Q-12.5 8.1 -8.6 7.4" stroke="#3a3a3a" stroke-width="2.7" fill="none" stroke-linecap="round"/><path d="M28.3 11.2Q30.5 8.1 34.4 7.4" stroke="#3a3a3a" stroke-width="2.7" fill="none" stroke-linecap="round"/><path d="M71.3 11.2Q73.5 8.1 77.4 7.4" stroke="#3a3a3a" stroke-width="2.7" fill="none" stroke-linecap="round"/><path d="M29.2 13.1Q30.5 10.5 33.4 10.4" stroke="#fff" stroke-width="1.4" fill="none" stroke-linecap="round"/><path d="M-17.0 16.2Q-13.7 13.3 -9.7 15.2" stroke="#1c1c1c" stroke-width="2.1" fill="none" stroke-linecap="round"/><path d="M26.0 16.2Q29.3 13.3 33.3 15.2" stroke="#1c1c1c" stroke-width="2.1" fill="none" stroke-linecap="round"/><path d="M69.0 16.2Q72.3 13.3 76.3 15.2" stroke="#1c1c1c" stroke-width="2.1" fill="none" stroke-linecap="round"/><path d="M27.1 18.5Q29.3 15.7 32.2 17.8" stroke="#fff" stroke-width="1.4" fill="none" stroke-linecap="round"/><path d="M-14.5 24.1Q-13.0 21.4 -9.9 21.7" stroke="#666" stroke-width="2.5" fill="none" stroke-linecap="round"/><path d="M28.5 24.1Q30.0 21.4 33.1 21.7" stroke="#666" stroke-width="2.5" fill="none" stroke-linecap="round"/><path d="M71.5 24.1Q73.0 21.4 76.1 21.7" stroke="#666" stroke-width="2.5" fill="none" stroke-linecap="round"/><path d="M29.2 26.2Q30.0 23.8 32.4 24.4" stroke="#fff" stroke-width="1.4" fill="none" stroke-linecap="round"/><path d="M-19.1 25.2Q-16.3 21.9 -13.1 24.8" stroke="#666" stroke-width="1.8" fill="none" stroke-linecap="round"/><path d="M23.9 25.2Q26.7 21.9 29.9 24.8" stroke="#666" stroke-width="1.8" fill="none" stroke-linecap="round"/><path d="M66.9 25.2Q69.7 21.9 72.9 24.8" stroke="#666" stroke-width="1.8" fill="none" stroke-linecap="round"/><path d="M24.8 27.5Q26.7 24.3 29.0 27.2" stroke="#fff" stroke-width="1.4" fill="none" stroke-linecap="round"/><path d="M-12.9 34.3Q-9.4 36.2 -8.1 32.5" stroke="#2a2a2a" stroke-width="2.1" fill="none" stroke-linecap="round"/><path d="M30.1 34.3Q33.6 36.2 34.9 32.5" stroke="#2a2a2a" stroke-width="2.1" fill="none" stroke-linecap="round"/><path d="M73.1 34.3Q76.6 36.2 77.9 32.5" stroke="#2a2a2a" stroke-width="2.1" fill="none" stroke-linecap="round"/><path d="M30.8 36.4Q33.6 38.6 34.2 35.1" stroke="#fff" stroke-width="1.4" fill="none" stroke-linecap="round"/><path d="M-16.8 39.9Q-14.0 36.6 -9.7 37.7" stroke="#555" stroke-width="2.2" fill="none" stroke-linecap="round"/><path d="M26.2 39.9Q29.0 36.6 33.3 37.7" stroke="#555" stroke-width="2.2" fill="none" stroke-linecap="round"/><path d="M69.2 39.9Q72.0 36.6 76.3 37.7" stroke="#555" stroke-width="2.2" fill="none" stroke-linecap="round"/><path d="M27.2 42.0Q29.0 39.0 32.2 40.5" stroke="#fff" stroke-width="1.4" fill="none" stroke-linecap="round"/><path d="M-10.5 1.6Q-7.4 -0.7 -4.0 1.1" stroke="#555" stroke-width="1.7" fill="none" stroke-linecap="round"/><path d="M32.5 1.6Q35.6 -0.7 39.0 1.1" stroke="#555" stroke-width="1.7" fill="none" stroke-linecap="round"/><path d="M75.5 1.6Q78.6 -0.7 82.0 1.1" stroke="#555" stroke-width="1.7" fill="none" stroke-linecap="round"/><path d="M33.4 3.9Q35.6 1.7 38.1 3.6" stroke="#fff" stroke-width="1.4" fill="none" stroke-linecap="round"/><path d="M-5.8 7.1Q-4.3 9.4 -1.6 8.9" stroke="#666" stroke-width="2.9" fill="none" stroke-linecap="round"/><path d="M37.2 7.1Q38.7 9.4 41.4 8.9" stroke="#666" stroke-width="2.9" fill="none" stroke-linecap="round"/><path d="M80.2 7.1Q81.7 9.4 84.4 8.9" stroke="#666" stroke-width="2.9" fill="none" stroke-linecap="round"/><path d="M37.9 9.8Q38.7 11.8 40.8 11.0" stroke="#fff" stroke-width="1.4" fill="none" stroke-linecap="round"/><path d="M-12.7 14.4Q-9.1 14.4 -8.6 10.9" stroke="#3a3a3a" stroke-width="2.0" fill="none" stroke-linecap="round"/><path d="M30.3 14.4Q33.9 14.4 34.4 10.9" stroke="#3a3a3a" stroke-width="2.0" fill="none" stroke-linecap="round"/><path d="M73.3 14.4Q76.9 14.4 77.4 10.9" stroke="#3a3a3a" stroke-width="2.0" fill="none" stroke-linecap="round"/><path d="M31.0 16.3Q33.9 16.8 33.8 13.8" stroke="#fff" stroke-width="1.4" fill="none" stroke-linecap="round"/><path d="M-9.7 19.3Q-6.9 15.9 -2.9 17.8" stroke="#3a3a3a" stroke-width="2.3" fill="none" stroke-linecap="round"/><path d="M33.3 19.3Q36.1 15.9 40.1 17.8" stroke="#3a3a3a" stroke-width="2.3" fill="none" stroke-linecap="round"/><path d="M76.3 19.3Q79.1 15.9 83.1 17.8" stroke="#3a3a3a" stroke-width="2.3" fill="none" stroke-linecap="round"/><path d="M34.3 21.5Q36.1 18.3 39.1 20.4" stroke="#fff" stroke-width="1.4" fill="none" stroke-linecap="round"/><path d="M-9.9 25.7Q-5.6 23.9 -3.1 27.8" stroke="#2a2a2a" stroke-width="2.1" fill="none" stroke-linecap="round"/><path d="M33.1 25.7Q37.4 23.9 39.9 27.8" stroke="#2a2a2a" stroke-width="2.1" fill="none" stroke-linecap="round"/><path d="M76.1 25.7Q80.4 23.9 82.9 27.8" stroke="#2a2a2a" stroke-width="2.1" fill="none" stroke-linecap="round"/><path d="M34.1 28.4Q37.4 26.3 38.9 29.9" stroke="#fff" stroke-width="1.4" fill="none" stroke-linecap="round"/><path d="M-8.5 33.2Q-7.0 29.8 -3.4 30.5" stroke="#666" stroke-width="1.9" fill="none" stroke-linecap="round"/><path d="M34.5 33.2Q36.0 29.8 39.6 30.5" stroke="#666" stroke-width="1.9" fill="none" stroke-linecap="round"/><path d="M77.5 33.2Q79.0 29.8 82.6 30.5" stroke="#666" stroke-width="1.9" fill="none" stroke-linecap="round"/><path d="M35.2 35.2Q36.0 32.2 38.9 33.3" stroke="#fff" stroke-width="1.4" fill="none" stroke-linecap="round"/><path d="M-14.1 38.7Q-11.8 36.1 -9.8 38.9" stroke="#1c1c1c" stroke-width="2.2" fill="none" stroke-linecap="round"/><path d="M28.9 38.7Q31.2 36.1 33.2 38.9" stroke="#1c1c1c" stroke-width="2.2" fill="none" stroke-linecap="round"/><path d="M71.9 38.7Q74.2 36.1 76.2 38.9" stroke="#1c1c1c" stroke-width="2.2" fill="none" stroke-linecap="round"/><path d="M29.5 41.1Q31.2 38.5 32.6 41.3" stroke="#fff" stroke-width="1.4" fill="none" stroke-linecap="round"/><path d="M-5.0 3.2Q-1.2 0.8 2.3 3.7" stroke="#555" stroke-width="2.2" fill="none" stroke-linecap="round"/><path d="M38.0 3.2Q41.8 0.8 45.3 3.7" stroke="#555" stroke-width="2.2" fill="none" stroke-linecap="round"/><path d="M81.0 3.2Q84.8 0.8 88.3 3.7" stroke="#555" stroke-width="2.2" fill="none" stroke-linecap="round"/><path d="M39.1 5.6Q41.8 3.2 44.2 6.0" stroke="#fff" stroke-width="1.4" fill="none" stroke-linecap="round"/><path d="M-1.1 9.1Q1.2 6.0 5.0 5.8" stroke="#555" stroke-width="2.4" fill="none" stroke-linecap="round"/><path d="M41.9 9.1Q44.2 6.0 48.0 5.8" stroke="#555" stroke-width="2.4" fill="none" stroke-linecap="round"/><path d="M84.9 9.1Q87.2 6.0 91.0 5.8" stroke="#555" stroke-width="2.4" fill="none" stroke-linecap="round"/><path d="M42.8 11.0Q44.2 8.4 47.1 8.7" stroke="#fff" stroke-width="1.4" fill="none" stroke-linecap="round"/><path d="M-4.3 15.7Q-3.5 12.3 -0.2 13.7" stroke="#3a3a3a" stroke-width="2.3" fill="none" stroke-linecap="round"/><path d="M38.7 15.7Q39.5 12.3 42.8 13.7" stroke="#3a3a3a" stroke-width="2.3" fill="none" stroke-linecap="round"/><path d="M81.7 15.7Q82.5 12.3 85.8 13.7" stroke="#3a3a3a" stroke-width="2.3" fill="none" stroke-linecap="round"/><path d="M39.3 17.8Q39.5 14.7 42.2 16.4" stroke="#fff" stroke-width="1.4" fill="none" stroke-linecap="round"/><path d="M-2.6 23.4Q-1.9 19.6 1.8 18.5" stroke="#1c1c1c" stroke-width="2.5" fill="none" stroke-linecap="round"/><path d="M40.4 23.4Q41.1 19.6 44.8 18.5" stroke="#1c1c1c" stroke-width="2.5" fill="none" stroke-linecap="round"/><path d="M83.4 23.4Q84.1 19.6 87.8 18.5" stroke="#1c1c1c" stroke-width="2.5" fill="none" stroke-linecap="round"/><path d="M41.0 25.0Q41.1 22.0 44.1 21.6" stroke="#fff" stroke-width="1.4" fill="none" stroke-linecap="round"/><path d="M-9.0 26.0Q-4.5 25.3 -2.4 29.4" stroke="#1c1c1c" stroke-width="2.7" fill="none" stroke-linecap="round"/><path d="M34.0 26.0Q38.5 25.3 40.6 29.4" stroke="#1c1c1c" stroke-width="2.7" fill="none" stroke-linecap="round"/><path d="M77.0 26.0Q81.5 25.3 83.6 29.4" stroke="#1c1c1c" stroke-width="2.7" fill="none" stroke-linecap="round"/><path d="M35.0 28.9Q38.5 27.7 39.6 31.3" stroke="#fff" stroke-width="1.4" fill="none" stroke-linecap="round"/><path d="M-4.5 31.9Q-0.8 31.7 1.4 34.7" stroke="#555" stroke-width="1.9" fill="none" stroke-linecap="round"/><path d="M38.5 31.9Q42.2 31.7 44.4 34.7" stroke="#555" stroke-width="1.9" fill="none" stroke-linecap="round"/><path d="M81.5 31.9Q85.2 31.7 87.4 34.7" stroke="#555" stroke-width="1.9" fill="none" stroke-linecap="round"/><path d="M39.4 34.7Q42.2 34.1 43.5 36.7" stroke="#fff" stroke-width="1.4" fill="none" stroke-linecap="round"/><path d="M-4.9 40.1Q-3.4 36.9 -0.0 36.2" stroke="#555" stroke-width="2.6" fill="none" stroke-linecap="round"/><path d="M38.1 40.1Q39.6 36.9 43.0 36.2" stroke="#555" stroke-width="2.6" fill="none" stroke-linecap="round"/><path d="M81.1 40.1Q82.6 36.9 86.0 36.2" stroke="#555" stroke-width="2.6" fill="none" stroke-linecap="round"/><path d="M38.9 41.9Q39.6 39.3 42.2 39.2" stroke="#fff" stroke-width="1.4" fill="none" stroke-linecap="round"/><path d="M11.3 24.3L12.7 22.5" stroke="#707070" stroke-width="1.2" stroke-linecap="round"/><path d="M26.0 1.6L27.6 -0.8" stroke="#707070" stroke-width="1.2" stroke-linecap="round"/><path d="M19.5 13.9L22.6 15.1" stroke="#707070" stroke-width="1.2" stroke-linecap="round"/><path d="M4.5 11.8L7.4 12.3" stroke="#707070" stroke-width="1.2" stroke-linecap="round"/><path d="M11.5 38.5L13.4 38.7" stroke="#707070" stroke-width="1.2" stroke-linecap="round"/><path d="M2.0 8.9L3.4 10.4" stroke="#707070" stroke-width="1.2" stroke-linecap="round"/><path d="M41.2 32.2L42.7 34.1" stroke="#707070" stroke-width="1.2" stroke-linecap="round"/><path d="M16.3 6.4L17.2 4.4" stroke="#707070" stroke-width="1.2" stroke-linecap="round"/><path d="M23.8 0.5L25.5 2.4" stroke="#707070" stroke-width="1.2" stroke-linecap="round"/><path d="M17.8 16.1L21.2 15.8" stroke="#707070" stroke-width="1.2" stroke-linecap="round"/><path d="M3.5 21.6L5.8 21.9" stroke="#707070" stroke-width="1.2" stroke-linecap="round"/><path d="M35.0 39.0L38.0 38.5" stroke="#707070" stroke-width="1.2" stroke-linecap="round"/><path d="M31.5 2.4L32.9 4.5" stroke="#707070" stroke-width="1.2" stroke-linecap="round"/><path d="M7.6 29.2L10.6 28.3" stroke="#707070" stroke-width="1.2" stroke-linecap="round"/><path d="M11.1 37.4L13.8 38.9" stroke="#707070" stroke-width="1.2" stroke-linecap="round"/><path d="M15.3 30.0L17.2 29.3" stroke="#707070" stroke-width="1.2" stroke-linecap="round"/><path d="M26.4 39.7L27.9 39.2" stroke="#707070" stroke-width="1.2" stroke-linecap="round"/><path d="M42.1 9.4L43.3 8.2" stroke="#707070" stroke-width="1.2" stroke-linecap="round"/><path d="M0.7 8.5L2.5 6.8" stroke="#707070" stroke-width="1.2" stroke-linecap="round"/><path d="M39.2 27.5L41.4 26.7" stroke="#707070" stroke-width="1.2" stroke-linecap="round"/><path d="M12.4 37.4L13.5 39.2" stroke="#707070" stroke-width="1.2" stroke-linecap="round"/><path d="M19.1 7.6L20.6 8.2" stroke="#707070" stroke-width="1.2" stroke-linecap="round"/><path d="M36.1 35.7L38.7 35.5" stroke="#707070" stroke-width="1.2" stroke-linecap="round"/><path d="M3.6 32.8L5.9 34.4" stroke="#707070" stroke-width="1.2" stroke-linecap="round"/><path d="M0.0 37.3L2.8 36.2" stroke="#707070" stroke-width="1.2" stroke-linecap="round"/><path d="M13.1 3.5L14.1 1.3" stroke="#707070" stroke-width="1.2" stroke-linecap="round"/><path d="M35.7 5.7L37.3 7.1" stroke="#707070" stroke-width="1.2" stroke-linecap="round"/><path d="M19.2 9.1L19.8 10.6" stroke="#707070" stroke-width="1.2" stroke-linecap="round"/><path d="M29.5 23.1L32.0 24.1" stroke="#707070" stroke-width="1.2" stroke-linecap="round"/><path d="M38.4 28.6L40.1 29.4" stroke="#707070" stroke-width="1.2" stroke-linecap="round"/></g>
<pattern id="pt" width="20" height="20" patternUnits="userSpaceOnUse" x="92" y="103"><use href="#tile"/></pattern>
<pattern id="pt2" width="20" height="20" patternUnits="userSpaceOnUse" patternTransform="translate(3 5)"><use href="#tile"/></pattern>
<pattern id="pt3" width="20" height="20" patternUnits="userSpaceOnUse" patternTransform="scale(2.15)"><use href="#tile"/></pattern>
</defs></svg>
<div class="a" style="left:0;top:0;width:928px;height:18px;background:#535353"></div>
<div class="a" style="left:0;top:18px;width:928px;height:1px;background:#3a3a3a"></div>
<div class="a" style="left:3.5px;top:2.5px;width:12px;height:10.5px;background:#0b2b3d;border:1px solid #2aa0d8;border-radius:1.5px"></div>
<div class="t" style="left:5.3px;top:3px;font-size:7px;color:#31c5f0;font-weight:bold;letter-spacing:-0.3px">Ps</div>
<div class="t" style="left:28.5px;top:3.500px;font-size:7.600px;color:#e2e2e2">File</div>
<div class="t" style="left:51.5px;top:3.500px;font-size:7.600px;color:#e2e2e2">Edit</div>
<div class="t" style="left:75px;top:3.500px;font-size:7.600px;color:#e2e2e2">Image</div>
<div class="t" style="left:107.5px;top:3.500px;font-size:7.600px;color:#e2e2e2">Layer</div>
<div class="t" style="left:137px;top:3.500px;font-size:7.600px;color:#e2e2e2">Type</div>
<div class="t" style="left:164px;top:3.500px;font-size:7.600px;color:#e2e2e2">Select</div>
<div class="t" style="left:195.5px;top:3.500px;font-size:7.600px;color:#e2e2e2">Filter</div>
<div class="t" style="left:224px;top:3.500px;font-size:7.600px;color:#e2e2e2">3D</div>
<div class="t" style="left:244.5px;top:3.500px;font-size:7.600px;color:#e2e2e2">View</div>
<div class="t" style="left:271px;top:3.500px;font-size:7.600px;color:#e2e2e2"><span style="letter-spacing:0.4px">Window</span></div>
<div class="t" style="left:311.2px;top:3.500px;font-size:7.600px;color:#e2e2e2"><span style="letter-spacing:0.2px">Help</span></div>
<div class="a" style="left:860px;top:-1px;width:69px;height:12.5px;border:1px solid #5f5f5f;background:#555"></div>
<div class="a" style="left:879.5px;top:0;width:1px;height:11px;background:#5f5f5f"></div>
<div class="a" style="left:898.5px;top:0;width:1px;height:11px;background:#5f5f5f"></div>
<div class="a" style="left:866.5px;top:6.4px;width:7.2px;height:1.800px;background:#dcdcdc"></div>
<svg style="left:885px;top:2.5px" width="8.5" height="7" viewBox="0 0 8.5 7"><path d="M0.6 2.7h4.800v3.7h-4.800zM3 2.7V0.6h4.900v3.7H5.4" fill="none" stroke="#d8d8d8" stroke-width="1.1"/></svg>
<svg style="left:911px;top:2.2px" width="7" height="6.2" viewBox="0 0 7 6.2"><path d="M0.5 0.3l6 5.6M6.5 0.3l-6 5.6" stroke="#e0e0e0" stroke-width="1.1"/></svg>
<div class="a" style="left:0;top:19px;width:928px;height:22px;background:#535353"></div>
<div class="a" style="left:0;top:41px;width:928px;height:1px;background:#383838"></div>
<div class="a" style="left:1px;top:22px;width:1px;height:17px;background:#474747"></div>
<div class="a" style="left:39px;top:22px;width:1px;height:17px;background:#484848"></div>
<svg style="left:12px;top:26.500px" width="10.5" height="10.5" viewBox="0 0 10 10"><path d="M5 0.2L6.8 2.4H5.6V4.4H7.6V3.2L9.8 5L7.6 6.800V5.6H5.6V7.6H6.8L5 9.8L3.2 7.6H4.4V5.6H2.4V6.800L0.2 5L2.4 3.2V4.4H4.4V2.4H3.2Z" fill="#e8e8e8"/></svg>
<svg style="left:28px;top:29.500px" width="6" height="4" viewBox="0 0 6 4"><path d="M0.500 0.500L3 3L5.5 0.500" fill="none" stroke="#b0b0b0" stroke-width="0.9"/></svg>
<div class="t" style="left:414px;top:25.500px;font-size:6.95px;color:#d8d8d8">Click and drag to reposition the pattern.</div>
<svg style="left:886px;top:25.5px" width="11" height="10.5" viewBox="0 0 11 10.5"><circle cx="6.3" cy="4.5" r="3.5" fill="none" stroke="#cfcfcf" stroke-width="1"/><path d="M3.800 7.2L0.800 10" stroke="#cfcfcf" stroke-width="1.2"/></svg>
<div class="a" style="left:906.3px;top:26.3px;width:11px;height:9px;border:1px solid #a8a8a8"></div>
<div class="a" style="left:907.8px;top:27.8px;width:2.2px;height:6px;background:#b0b0b0"></div>
<div class="a" style="left:911px;top:27.8px;width:5px;height:6px;background:#5c5c5c"></div>
<svg style="left:922.5px;top:29.5px" width="6" height="4" viewBox="0 0 6 4"><path d="M0.5 0.5L3 3L5.5 0.5" fill="none" stroke="#a0a0a0" stroke-width="0.9"/></svg>
<div class="a" style="left:0;top:42px;width:928px;height:19px;background:#424242"></div>
<div class="a" style="left:25px;top:42px;width:170px;height:19px;background:#535353"></div>
<div class="t" style="left:32px;top:47.3px;font-size:7.5px;font-weight:bold;color:#ececec">Untitled-1 @ 33.3% (Color Fill 1, RGB/8) *</div>
<svg style="left:184.7px;top:50px" width="4" height="4" viewBox="0 0 4 4"><path d="M0.3 0.3l3.4 3.4M3.7 0.3l-3.4 3.4" stroke="#c4c4c4" stroke-width="0.8"/></svg>
<div class="a" style="left:25px;top:61px;width:614px;height:393px;background:#282828"></div>
<svg style="left:0;top:0" width="928" height="454"><rect x="92" y="103" width="480" height="343" fill="url(#pt)" filter="url(#soft)"/></svg>
<div class="a" style="left:0;top:42px;width:25px;height:412px;background:#535353"></div>
<div class="a" style="left:0;top:42px;width:25px;height:7px;background:#424242"></div>
<div class="a" style="left:24px;top:42px;width:1px;height:412px;background:#3e3e3e"></div>
<svg style="left:1px;top:44px" width="6" height="4" viewBox="0 0 6 4"><path d="M0 0L2.500 2L0 4ZM3 0L5.500 2L3 4Z" fill="#d0d0d0"/></svg>
<div class="a" style="left:4px;top:53px;width:15px;height:1px;background:#484848"></div>
<svg style="left:4.3px;top:64px" width="13" height="13" viewBox="0 0 13 13"><g transform="translate(1,1) scale(1.05)"><path d="M5 0.2L6.8 2.4H5.6V4.4H7.6V3.2L9.8 5L7.6 6.800V5.6H5.6V7.6H6.8L5 9.8L3.2 7.6H4.4V5.6H2.4V6.800L0.2 5L2.4 3.2V4.4H4.4V2.4H3.2Z" fill="#e8e8e8"/></g><path d="M14.3 12.7v-2.2l-2.2 2.2z" fill="#cfcfcf"/></svg>
<svg style="left:4.3px;top:81.5px" width="13" height="13" viewBox="0 0 13 13"><rect x="1.1" y="2.3" width="10.6" height="8" fill="none" stroke="#e4e4e4" stroke-width="1.3" stroke-dasharray="2.2 1.1"/><path d="M14.3 12.7v-2.2l-2.2 2.2z" fill="#cfcfcf"/></svg>
<svg style="left:4.3px;top:99px" width="13" height="13" viewBox="0 0 13 13"><ellipse cx="6.200" cy="5" rx="5" ry="3.500" fill="none" stroke="#e4e4e4" stroke-width="1.1"/><path d="M3.500 7.800C2 9 2.500 11 4 11.500" fill="none" stroke="#e4e4e4" stroke-width="1"/><path d="M14.3 12.7v-2.2l-2.2 2.2z" fill="#cfcfcf"/></svg>
<svg style="left:4.3px;top:117px" width="13" height="13" viewBox="0 0 13 13"><ellipse cx="4" cy="8.3" rx="3.2" ry="2.8" fill="none" stroke="#e4e4e4" stroke-width="1" stroke-dasharray="1.6 0.9"/><path d="M4.6 8.8C5.2 6.6 6.5 5.6 7.6 6.2C8.6 7 8 8.6 5.6 9.6Z" fill="#e4e4e4"/><path d="M7.4 5.6L11.6 1.2L12.6 2.2L8.6 6.800Z" fill="#e4e4e4"/><path d="M14.3 12.7v-2.2l-2.2 2.2z" fill="#cfcfcf"/></svg>
<svg style="left:4.3px;top:134.5px" width="13" height="13" viewBox="0 0 13 13"><path d="M3 0.500V9.500H12.500M0.500 3H9.500V12.500" fill="none" stroke="#e4e4e4" stroke-width="1.5"/></svg>
<svg style="left:4.3px;top:152.5px" width="13" height="13" viewBox="0 0 13 13"><path d="M1 12L1.600 9.800L7 4.400L8.600 6L3.200 11.400Z" fill="none" stroke="#e4e4e4" stroke-width="1"/><path d="M6.500 3.200L9.800 6.500L10.600 5.700L9.800 4.900L11.800 2.900A1.200 1.200 0 0 0 10.100 1.200L8.100 3.200L7.300 2.400Z" fill="#e4e4e4"/><path d="M14.3 12.7v-2.2l-2.2 2.2z" fill="#cfcfcf"/></svg>
<svg style="left:4.3px;top:170.5px" width="13" height="13" viewBox="0 0 13 13"><g transform="rotate(-45 6.500 6.500)"><rect x="0.500" y="3.500" width="12" height="6" rx="2.500" fill="#e4e4e4"/><rect x="4.500" y="4.300" width="4" height="4.400" fill="#535353"/><circle cx="5.600" cy="5.600" r="0.500" fill="#e4e4e4"/><circle cx="7.400" cy="5.600" r="0.500" fill="#e4e4e4"/><circle cx="5.600" cy="7.400" r="0.500" fill="#e4e4e4"/><circle cx="7.400" cy="7.400" r="0.500" fill="#e4e4e4"/></g><path d="M14.3 12.7v-2.2l-2.2 2.2z" fill="#cfcfcf"/></svg>
<svg style="left:4.3px;top:188.5px" width="13" height="13" viewBox="0 0 13 13"><path d="M11.800 0.800C9 2.500 6.500 5 5 7.200L6.300 8.500C8.500 7 11 4 12.300 1.300Z" fill="#e4e4e4"/><path d="M4.300 8C2.500 8 2.500 10.500 0.800 11.500C3 12.300 5.500 11.500 5.500 9.200Z" fill="#e4e4e4"/><path d="M14.3 12.7v-2.2l-2.2 2.2z" fill="#cfcfcf"/></svg>
<svg style="left:4.3px;top:206.5px" width="13" height="13" viewBox="0 0 13 13"><circle cx="6.5" cy="3" r="2.3" fill="#e4e4e4"/><path d="M5.4 4.5L5 7.3H2.800a1.600 1.600 0 0 0-1.600 1.600V10H11.800V8.900a1.600 1.600 0 0 0-1.600-1.600H8L7.600 4.5Z" fill="#e4e4e4"/><rect x="1.2" y="10.7" width="10.6" height="1.3" fill="#e4e4e4"/><path d="M14.3 12.7v-2.2l-2.2 2.2z" fill="#cfcfcf"/></svg>
<svg style="left:4.3px;top:224px" width="13" height="13" viewBox="0 0 13 13"><path d="M11.800 0.800C9.500 2.500 7.500 4.500 6 6.800L7 7.800C9 6.500 11 4 12.300 1.300Z" fill="#e4e4e4"/><path d="M5.300 7.500C3.800 7.500 3.800 9.500 2.300 10.500C4.300 11.200 6.300 10.500 6.300 8.500Z" fill="#e4e4e4"/><path d="M1 6A4 4 0 0 1 6 2.200" fill="none" stroke="#e4e4e4" stroke-width="1"/><path d="M0 5L1.200 7.200L2.600 5Z" fill="#e4e4e4"/><path d="M14.3 12.7v-2.2l-2.2 2.2z" fill="#cfcfcf"/></svg>
<svg style="left:4.3px;top:242px" width="13" height="13" viewBox="0 0 13 13"><path d="M1 8.500L6.500 3L11 7.500L7.500 11H3.500Z" fill="none" stroke="#e4e4e4" stroke-width="1"/><path d="M6.500 3L11 7.500L8.300 10.200L3.800 5.700Z" fill="#e4e4e4"/><path d="M14.3 12.7v-2.2l-2.2 2.2z" fill="#cfcfcf"/></svg>
<svg style="left:4.3px;top:260px" width="13" height="13" viewBox="0 0 13 13"><defs><linearGradient id="gg" x1="0" x2="1" y1="0" y2="0.6"><stop offset="0" stop-color="#2c2c2c"/><stop offset="1" stop-color="#e0e0e0"/></linearGradient></defs><rect x="0.5" y="1.5" width="11.5" height="9.5" fill="url(#gg)" stroke="#e4e4e4" stroke-width="1"/><path d="M14.3 12.7v-2.2l-2.2 2.2z" fill="#cfcfcf"/></svg>
<svg style="left:4.3px;top:277.5px" width="13" height="13" viewBox="0 0 13 13"><path d="M6.200 1C8 4 10 6 10 8.200A3.800 3.800 0 0 1 2.400 8.200C2.400 6 4.400 4 6.200 1Z" fill="#e4e4e4"/><path d="M14.3 12.7v-2.2l-2.2 2.2z" fill="#cfcfcf"/></svg>
<svg style="left:4.3px;top:295.5px" width="13" height="13" viewBox="0 0 13 13"><circle cx="7.500" cy="4.500" r="3.300" fill="#e4e4e4"/><path d="M5.500 7L1.500 11.500" stroke="#e4e4e4" stroke-width="1.600"/><path d="M14.3 12.7v-2.2l-2.2 2.2z" fill="#cfcfcf"/></svg>
<svg style="left:4.3px;top:313.5px" width="13" height="13" viewBox="0 0 13 13"><path d="M2 11.500L3 6L8 3L11 6L8 11L2.500 12Z" fill="none" stroke="#e4e4e4" stroke-width="1.100"/><circle cx="6.500" cy="7.500" r="1" fill="#e4e4e4"/><path d="M2.500 11.500L6 8" stroke="#e4e4e4" stroke-width="0.800"/><path d="M8 1.500L12 5.500" stroke="#e4e4e4" stroke-width="1.300"/><path d="M14.3 12.7v-2.2l-2.2 2.2z" fill="#cfcfcf"/></svg>
<div class="t" style="left:5.3px;top:331px;font-size:13px;font-weight:bold;line-height:14px;height:14px;font-family:'Liberation Serif',serif;color:#e4e4e4">T</div>
<svg style="left:4.3px;top:331px" width="13" height="13" viewBox="0 0 13 13"><path d="M14.3 12.7v-2.2l-2.2 2.2z" fill="#cfcfcf"/></svg>
<svg style="left:4.3px;top:349px" width="13" height="13" viewBox="0 0 13 13"><path d="M3.5 1L3.5 11L6 8.5L7.800 12L9.3 11.3L7.6 7.800L11 7.5Z" fill="#1c1c1c" stroke="#e4e4e4" stroke-width="0.9" stroke-linejoin="round"/><path d="M14.3 12.7v-2.2l-2.2 2.2z" fill="#cfcfcf"/></svg>
<svg style="left:4.3px;top:366.5px" width="13" height="13" viewBox="0 0 13 13"><rect x="0.800" y="2.500" width="10.500" height="8" fill="#6a6a6a" stroke="#e4e4e4" stroke-width="1.1"/><path d="M14.3 12.7v-2.2l-2.2 2.2z" fill="#cfcfcf"/></svg>
<svg style="left:4.3px;top:384px" width="13" height="13" viewBox="0 0 13 13"><path d="M3.300 7V3.200a0.800 0.800 0 0 1 1.600 0V6V1.800a0.800 0.800 0 0 1 1.600 0V6V2.200a0.800 0.800 0 0 1 1.600 0V6.200V3.600a0.800 0.800 0 0 1 1.600 0V8.500C9.700 11 8.500 12.300 6.500 12.300C4.500 12.300 3.800 11.500 2.800 10L1.200 7.600C0.800 6.800 1.800 6.200 2.400 6.900Z" fill="#e4e4e4"/><path d="M14.3 12.7v-2.2l-2.2 2.2z" fill="#cfcfcf"/></svg>
<svg style="left:4.3px;top:402px" width="13" height="13" viewBox="0 0 13 13"><circle cx="5" cy="5" r="3.800" fill="none" stroke="#e4e4e4" stroke-width="1.300"/><path d="M7.800 7.800L12 12" stroke="#e4e4e4" stroke-width="1.800"/></svg>
<svg style="left:4.3px;top:420px" width="13" height="13" viewBox="0 0 13 13"><circle cx="2.3" cy="6.800" r="1.35" fill="#e4e4e4"/><circle cx="6.5" cy="6.800" r="1.35" fill="#e4e4e4"/><circle cx="10.7" cy="6.800" r="1.35" fill="#e4e4e4"/><path d="M14.3 12.7v-2.2l-2.2 2.2z" fill="#cfcfcf"/></svg>
<div class="a" style="left:2px;top:439px;width:4.5px;height:4.5px;background:#111;border:0.5px solid #ddd"></div>
<div class="a" style="left:4.5px;top:441.5px;width:4.5px;height:4.5px;background:#fff;border:0.5px solid #222"></div>
<svg style="left:12.5px;top:438px" width="8" height="8" viewBox="0 0 8 8"><path d="M1.5 2.5H5.5V6.5" fill="none" stroke="#e4e4e4" stroke-width="0.9"/><path d="M0 2.5L2 1V4ZM5.5 8L4 6H7Z" fill="#e4e4e4"/></svg>
<div class="a" style="left:1.5px;top:450px;width:13.5px;height:8px;background:#0c0c0c;border:1px solid #e0e0e0"></div>
<div class="a" style="left:639px;top:61px;width:11px;height:393px;background:#474747"></div>
<div class="a" style="left:650px;top:42px;width:278px;height:412px;background:#535353"></div>
<div class="a" style="left:650px;top:42px;width:1px;height:412px;background:#3e3e3e"></div>
<div class="a" style="left:679px;top:42px;width:1px;height:412px;background:#3e3e3e"></div>
<div class="a" style="left:651px;top:42px;width:28px;height:14px;background:#424242"></div>
<div class="a" style="left:680px;top:42px;width:248px;height:9px;background:#424242"></div>
<svg style="left:667.5px;top:44px" width="6" height="4" viewBox="0 0 6 4"><path d="M2.5 0L0 2L2.5 4ZM5.5 0L3 2L5.5 4Z" fill="#d0d0d0"/></svg>
<svg style="left:922.5px;top:44.5px" width="6" height="4" viewBox="0 0 6 4"><path d="M0 0L2.5 2L0 4ZM3 0L5.5 2L3 4Z" fill="#d0d0d0"/></svg>
<div class="a" style="left:680px;top:51px;width:248px;height:17px;background:#424242"></div>
<div class="a" style="left:921.3px;top:57px;width:6.7px;height:5px;background:repeating-linear-gradient(to bottom,#a2a2a2 0,#a2a2a2 1px,#6a6a6a 1px,#6a6a6a 2px)"></div>
<div class="a" style="left:680px;top:50.5px;width:29px;height:17.5px;background:#4e4e4e"></div>
<div class="a" style="left:652px;top:50.5px;width:24.3px;height:6px;background:#4c4c4c"></div>
<div class="a" style="left:908px;top:74px;width:13.500px;height:63px;background:linear-gradient(to bottom,#f00 0%,#f0f 17%,#00f 33%,#0ff 50%,#0f0 67%,#ff0 83%,#f00 100%)"></div>
<svg style="left:902px;top:134px" width="4.6" height="5" viewBox="0 0 4.6 5"><path d="M0 0L4.6 2.5L0 5Z" fill="#f0f0f0"/></svg>
<div class="a" style="left:680px;top:142px;width:248px;height:19.4px;background:#424242"></div>
<div class="a" style="left:921.3px;top:150px;width:6.7px;height:5px;background:repeating-linear-gradient(to bottom,#a2a2a2 0,#a2a2a2 1px,#6a6a6a 1px,#6a6a6a 2px)"></div>
<div class="a" style="left:922px;top:170px;width:6px;height:145px;background:#4a4a4a"></div>
<div class="a" style="left:922px;top:176px;width:6px;height:68px;background:#6a6a6a"></div>
<svg style="left:922.500px;top:171px" width="5" height="3" viewBox="0 0 5 3"><path d="M0.500 2.500L2.500 0.500L4.500 2.500" fill="none" stroke="#aaa" stroke-width="0.800"/></svg>
<div class="t" style="left:898px;top:199px;font-size:10px;font-weight:bold;color:#fff;line-height:12px;height:12px">a</div>
<div class="a" style="left:880px;top:238px;width:36px;height:41px;background:#2b2b2b;border-radius:3px"></div>
<div class="a" style="left:880px;top:286px;width:36px;height:28px;background:#2b2b2b;border-radius:3px 3px 0 0"></div>
<svg style="left:898px;top:252px" width="7" height="12" viewBox="0 0 7 12"><path d="M0.500 0.500L6 6L0.500 11.500" fill="none" stroke="#f0f0f0" stroke-width="1"/></svg>
<svg style="left:898px;top:299px" width="7" height="12" viewBox="0 0 7 12"><path d="M0.500 0.500L6 6L0.500 11.500" fill="none" stroke="#f0f0f0" stroke-width="1"/></svg>
<svg style="left:922.500px;top:304px" width="5" height="3" viewBox="0 0 5 3"><path d="M0.500 0.500L2.500 2.500L4.500 0.500" fill="none" stroke="#aaa" stroke-width="0.800"/></svg>
<div class="a" style="left:680px;top:314px;width:248px;height:21px;background:#434343"></div>
<div class="a" style="left:921.3px;top:322px;width:6.7px;height:5px;background:repeating-linear-gradient(to bottom,#a2a2a2 0,#a2a2a2 1px,#6a6a6a 1px,#6a6a6a 2px)"></div>
<div class="a" style="left:680px;top:355px;width:248px;height:1px;background:#454545"></div>
<div class="a" style="left:680px;top:375px;width:248px;height:1px;background:#454545"></div>
<div class="a" style="left:680px;top:394px;width:248px;height:1px;background:#454545"></div>
<div class="a" style="left:697.5px;top:395px;width:1px;height:59px;background:#454545"></div>
<div class="a" style="left:698.5px;top:395.5px;width:216px;height:28.5px;background:#696969"></div>
<div class="a" style="left:914.3px;top:395.5px;width:7.7px;height:28.5px;background:#5e5e5e"></div>
<div class="a" style="left:922px;top:395.5px;width:6px;height:58.5px;background:#3e3e3e"></div>
<div class="a" style="left:922px;top:407px;width:6px;height:42px;background:#6a6a6a"></div>
<svg style="left:922.5px;top:399.5px" width="5" height="3" viewBox="0 0 5 3"><path d="M0.5 2.5L2.5 0.5L4.5 2.5" fill="none" stroke="#c8c8c8" stroke-width="0.8"/></svg>
<svg style="left:915px;top:408.5px" width="6" height="4" viewBox="0 0 6 4"><path d="M0.5 3.5L3 0.8L5.5 3.5" fill="none" stroke="#d8d8d8" stroke-width="0.9"/></svg>
<svg style="left:685px;top:407.7px" width="9" height="7" viewBox="0 0 9 7"><path d="M0.2 3.5C2 0.2 7 0.2 8.800 3.5C7 6.800 2 6.800 0.2 3.5Z" fill="#f0f0f0"/><circle cx="4.5" cy="3.5" r="1.7" fill="#505050"/><circle cx="4.5" cy="3.5" r="0.8" fill="#f0f0f0"/></svg>
<div class="a" style="left:700.2px;top:396.3px;width:26px;height:26px;border:1px solid #d4d4d4;border-radius:1.5px"></div>
<div class="a" style="left:706px;top:396px;width:14.5px;height:1.5px;background:#696969"></div>
<div class="a" style="left:700px;top:403px;width:1.5px;height:13px;background:#696969"></div>
<div class="a" style="left:725px;top:403px;width:1.5px;height:13px;background:#696969"></div>
<div class="a" style="left:702.5px;top:399.3px;width:21.5px;height:21.5px;background:#fdf3f2;border:1px solid #3a3a3a"></div>
<div class="a" style="left:703.5px;top:415px;width:19.5px;height:4.800px;background:#c4c4c4;border-top:1px solid #3a3a3a"></div>
<div class="a" style="left:704.5px;top:418.3px;width:17.5px;height:1px;background:#3a3a3a"></div>
<svg style="left:711.3px;top:416px" width="4" height="3" viewBox="0 0 4 3"><path d="M0 3L2 0L4 3Z" fill="#1a1a1a"/></svg>
<div class="a" style="left:709.5px;top:421.5px;width:7.5px;height:1px;background:#2a2a2a"></div>
<svg style="left:725.9px;top:404.8px" width="5" height="11" viewBox="0 0 5 11"><rect x="0.8" y="0.8" width="3.4" height="4" rx="1.5" fill="none" stroke="#e8e8e8" stroke-width="1"/><rect x="0.8" y="6.2" width="3.4" height="4" rx="1.5" fill="none" stroke="#e8e8e8" stroke-width="1"/><path d="M2.5 3.5V7.5" stroke="#e8e8e8" stroke-width="1"/></svg>
<div class="a" style="left:733.8px;top:402px;width:22.8px;height:16.2px;background:#fff;border:1px solid #3a3a3a"></div>
<div class="t" style="left:762.3px;top:406.4px;font-size:6.5px;color:#f4f4f4">Color Fill 1</div>
<div class="t" style="left:904.2px;top:404.6px;font-size:9.5px;font-style:italic;color:#f6f6f6;letter-spacing:0.6px;line-height:12px;height:12px">fx</div>
<svg style="left:713px;top:427.4px" width="9" height="7" viewBox="0 0 9 7"><path d="M0.2 3.5C2 0.2 7 0.2 8.800 3.5C7 6.800 2 6.800 0.2 3.5Z" fill="#f0f0f0"/><circle cx="4.5" cy="3.5" r="1.7" fill="#505050"/><circle cx="4.5" cy="3.5" r="0.8" fill="#f0f0f0"/></svg>
<div class="t" style="left:725.6px;top:426px;font-size:6.8px;color:#ececec">Effects</div>
<svg style="left:724.7px;top:440.1px" width="9" height="7" viewBox="0 0 9 7"><path d="M0.2 3.5C2 0.2 7 0.2 8.800 3.5C7 6.800 2 6.800 0.2 3.5Z" fill="#f0f0f0"/><circle cx="4.5" cy="3.5" r="1.7" fill="#505050"/><circle cx="4.5" cy="3.5" r="0.8" fill="#f0f0f0"/></svg>
<div class="t" style="left:736.9px;top:438.7px;font-size:6.8px;color:#ececec">Pattern Overlay</div>
<div class="a" style="left:679px;top:449.5px;width:243px;height:1px;background:#454545"></div>
<div class="a" style="left:702.3px;top:451.3px;width:21.2px;height:3px;background:#2b2b2b"></div>
<div class="a" style="left:350.2px;top:55.800px;width:547.6px;height:336.6px;background:#f1c560"></div>
<div class="a" style="left:355.5px;top:77.2px;width:537.1px;height:309.6px;background:#535353"></div>
<div class="t" style="left:599.500px;top:60px;font-size:9.700px;line-height:13px;height:13px;color:#2a2a2a">Layer Style</div>
<div class="a" style="left:872px;top:56px;width:21px;height:14px;background:#cf4a4c"></div>
<svg style="left:879.500px;top:60px" width="6" height="6" viewBox="0 0 6 6"><path d="M0.500 0.500L5.500 5.500M5.500 0.500L0.500 5.500" stroke="#fff" stroke-width="1.300"/></svg>
<div class="a" style="left:362.5px;top:84.5px;width:157.5px;height:296px;background:#525252;border:1px solid #474747"></div>
<div class="a" style="left:507.5px;top:85.5px;width:11.5px;height:276px;background:#494949"></div>
<div class="a" style="left:363.5px;top:102.70px;width:144px;height:1px;background:#474747"></div>
<div class="t" style="left:367.6px;top:89.20px;font-size:6.8px;color:#ededed">Styles</div>
<div class="a" style="left:363.5px;top:120.50px;width:144px;height:1px;background:#474747"></div>
<div class="t" style="left:367.6px;top:107.00px;font-size:6.8px;color:#ededed">Blending Options</div>
<div class="a" style="left:363.5px;top:138.30px;width:144px;height:1px;background:#474747"></div>
<div class="cb" style="left:367.3px;top:126.20px"></div>
<div class="t" style="left:377.4px;top:124.80px;font-size:6.8px;color:#ededed">Bevel &amp; Emboss</div>
<div class="a" style="left:363.5px;top:156.10px;width:144px;height:1px;background:#474747"></div>
<div class="cb" style="left:374.3px;top:144.00px"></div>
<div class="t" style="left:384.2px;top:142.60px;font-size:6.8px;color:#ededed">Contour</div>
<div class="a" style="left:363.5px;top:173.90px;width:144px;height:1px;background:#474747"></div>
<div class="cb" style="left:374.3px;top:161.80px"></div>
<div class="t" style="left:384.2px;top:160.40px;font-size:6.8px;color:#ededed">Texture</div>
<div class="a" style="left:363.5px;top:191.70px;width:144px;height:1px;background:#474747"></div>
<div class="cb" style="left:367.3px;top:179.60px"></div>
<div class="t" style="left:377.4px;top:178.20px;font-size:6.8px;color:#ededed">Stroke</div>
<div class="plus" style="top:178.20px"></div>
<div class="a" style="left:363.5px;top:209.50px;width:144px;height:1px;background:#474747"></div>
<div class="cb" style="left:367.3px;top:197.40px"></div>
<div class="t" style="left:377.4px;top:196.00px;font-size:6.8px;color:#ededed">Inner Shadow</div>
<div class="plus" style="top:196.00px"></div>
<div class="a" style="left:363.5px;top:227.30px;width:144px;height:1px;background:#474747"></div>
<div class="cb" style="left:367.3px;top:215.20px"></div>
<div class="t" style="left:377.4px;top:213.80px;font-size:6.8px;color:#ededed">Inner Glow</div>
<div class="a" style="left:363.5px;top:245.10px;width:144px;height:1px;background:#474747"></div>
<div class="cb" style="left:367.3px;top:233.00px"></div>
<div class="t" style="left:377.4px;top:231.60px;font-size:6.8px;color:#ededed">Satin</div>
<div class="a" style="left:363.5px;top:262.90px;width:144px;height:1px;background:#474747"></div>
<div class="cb" style="left:367.3px;top:250.80px"></div>
<div class="t" style="left:377.4px;top:249.40px;font-size:6.8px;color:#ededed">Color Overlay</div>
<div class="plus" style="top:249.40px"></div>
<div class="a" style="left:363.5px;top:280.70px;width:144px;height:1px;background:#474747"></div>
<div class="cb" style="left:367.3px;top:268.60px"></div>
<div class="t" style="left:377.4px;top:267.20px;font-size:6.8px;color:#ededed">Gradient Overlay</div>
<div class="plus" style="top:267.20px"></div>
<div class="a" style="left:363.5px;top:281.70px;width:144px;height:16.80px;background:#6a6a6a"></div>
<div class="a" style="left:363.5px;top:298.50px;width:144px;height:1px;background:#474747"></div>
<div class="cb" style="left:367.3px;top:286.40px;background:#f4f4f4;border-color:#f4f4f4"></div>
<svg style="left:368.0px;top:287.10px" width="6" height="6" viewBox="0 0 6 6"><path d="M0.9 3L2.4 4.6L5.1 1.1" fill="none" stroke="#222" stroke-width="1.3"/></svg>
<div class="t" style="left:377.4px;top:285.00px;font-size:6.8px;color:#ededed">Pattern Overlay</div>
<div class="a" style="left:363.5px;top:316.30px;width:144px;height:1px;background:#474747"></div>
<div class="cb" style="left:367.3px;top:304.20px"></div>
<div class="t" style="left:377.4px;top:302.80px;font-size:6.8px;color:#ededed">Outer Glow</div>
<div class="a" style="left:363.5px;top:334.10px;width:144px;height:1px;background:#474747"></div>
<div class="cb" style="left:367.3px;top:322.00px"></div>
<div class="t" style="left:377.4px;top:320.60px;font-size:6.8px;color:#ededed">Drop Shadow</div>
<div class="plus" style="top:320.60px"></div>
<div class="t" style="left:369.6px;top:365.3px;font-size:9.5px;font-style:italic;color:#f2f2f2;letter-spacing:0.6px;line-height:12px;height:12px">fx</div>
<div class="a" style="left:376.8px;top:375px;width:1.5px;height:1.2px;background:#f0f0f0"></div>
<svg style="left:387px;top:366.5px" width="8" height="8" viewBox="0 0 8 8"><path d="M4 0.5L7.5 4H5.5V7.5H2.5V4H0.5Z" fill="#787878"/></svg>
<svg style="left:405.5px;top:366.5px" width="8" height="8" viewBox="0 0 8 8"><path d="M4 7.5L7.5 4H5.5V0.5H2.5V4H0.5Z" fill="#787878"/></svg>
<svg style="left:504.5px;top:366px" width="8" height="9.5" viewBox="0 0 8 9.5"><path d="M1.5 2.8H6.5V9H1.5Z" fill="none" stroke="#cfcfcf" stroke-width="1"/><path d="M0.5 2.3H7.5M2.800 1.2H5.2M3.2 4.3V7.5M4.800 4.3V7.5" stroke="#cfcfcf" stroke-width="0.9"/></svg>
<div class="a" style="left:531px;top:88px;width:254.5px;height:291px;border:1px solid #4b4b4b;box-shadow:inset 1px 1px 0 #585858,1px 1px 0 #585858"></div>
<div class="a" style="left:543px;top:84px;width:53px;height:9px;background:#535353"></div>
<div class="t" style="left:546px;top:83.500px;font-size:6.800px;color:#e8e8e8">Pattern Overlay</div>
<div class="a" style="left:537.3px;top:97.3px;width:242.5px;height:113px;border:1px solid #4b4b4b;box-shadow:inset 1px 1px 0 #585858,1px 1px 0 #585858"></div>
<div class="a" style="left:549px;top:94px;width:27px;height:9px;background:#535353"></div>
<div class="t" style="left:551.500px;top:93px;font-size:6.800px;color:#e8e8e8">Pattern</div>
<div class="t" style="left:489px;width:100px;text-align:right;top:108px;font-size:6.800px;color:#e0e0e0">Blend Mode:</div>
<div class="a" style="left:594px;top:107.500px;width:78px;height:11.500px;background:#454545;border-radius:1px"></div>
<div class="t" style="left:599px;top:108.500px;font-size:6.800px;color:#f0f0f0">Normal</div>
<svg style="left:664.500px;top:111.500px" width="5" height="4" viewBox="0 0 5 4"><path d="M0.500 0.500L2.500 2.800L4.500 0.500" fill="none" stroke="#cfcfcf" stroke-width="0.900"/></svg>
<div class="t" style="left:489px;width:100px;text-align:right;top:122.500px;font-size:6.800px;color:#e0e0e0">Opacity:</div>
<div class="a" style="left:597.500px;top:125px;width:66px;height:1.500px;background:#7d7d7d"></div>
<svg style="left:658px;top:126.500px" width="8" height="7" viewBox="0 0 8 7"><path d="M4 0.300L7.700 6.700H0.300Z" fill="#f4f4f4"/></svg>
<div class="a" style="left:670px;top:122.500px;width:30px;height:10.500px;background:#454545;border-radius:1px"></div>
<div class="t" style="left:674px;top:123px;font-size:6.800px;color:#f0f0f0">100</div>
<div class="t" style="left:703px;top:122.500px;font-size:6.800px;color:#e0e0e0">%</div>
<div class="t" style="left:489px;width:100px;text-align:right;top:153.500px;font-size:6.800px;color:#e0e0e0">Pattern:</div>
<svg style="left:594.500px;top:137.500px;overflow:hidden" width="43" height="41.500" viewBox="0 0 43 41.500"><use href="#swt"/></svg>
<div class="a" style="left:637.500px;top:137.500px;width:7.500px;height:41.500px;background:#3a3a3a"></div>
<svg style="left:638.500px;top:156.500px" width="5" height="4" viewBox="0 0 5 4"><path d="M0.500 0.500L2.500 2.800L4.500 0.500" fill="none" stroke="#cfcfcf" stroke-width="0.900"/></svg>
<svg style="left:656px;top:155.500px" width="8" height="8" viewBox="0 0 8 8"><path d="M0.800 0.800H6.800V7H3L0.800 4.800Z" fill="none" stroke="#e0e0e0" stroke-width="1"/><path d="M0.800 4.800H3V7" fill="none" stroke="#e0e0e0" stroke-width="0.800"/></svg>
<div class="a" style="left:672px;top:153.500px;width:64px;height:10px;background:#454545;border-radius:1px"></div>
<div class="t" style="left:672px;width:64px;text-align:center;top:153.500px;font-size:6.950px;color:#f0f0f0">Snap to Origin</div>
<div class="a" style="left:650px;top:215.500px;width:72.500px;height:10px;background:#454545;border-radius:1px"></div>
<div class="t" style="left:645.3px;width:70px;text-align:right;top:215.5px;font-size:6.95px;color:#f0f0f0">Make Default</div>
<div class="a" style="left:527px;top:179px;width:185px;height:107.500px;background:#535353;border:1.500px solid #636363"></div>
<div class="a" style="left:537px;top:189px;width:143px;height:87.500px;background:#494949"></div>
<div class="a" style="left:671.500px;top:189px;width:8.500px;height:87.500px;background:#4d4d4d"></div>
<div class="sw" style="left:539.3px;top:191px;background:#fff;"><svg style="left:0;top:0" width="18.500" height="18" viewBox="0 0 18.500 18"><path d="M2 16.500L16.500 1.500" stroke="#111" stroke-width="3"/></svg></div>
<div class="sw" style="left:561.2px;top:191px;background:#535353;"><div class="a" style="left:6.500px;top:0;width:5.500px;height:18px;background:#fff"></div><div class="a" style="left:6.500px;top:0;width:5.500px;height:4px;background:#000"></div></div>
<div class="sw" style="left:583px;top:191px;background:#535353;"><div class="a" style="left:0;top:6.500px;width:18.500px;height:5px;background:#fff"></div><div class="a" style="left:0;top:6.500px;width:4.500px;height:5px;background:#000"></div></div>
<div class="sw" style="left:605.2px;top:191px;background:#fff;"><div class="a" style="left:0;top:0;width:18.500px;height:2px;background:#000"></div><div class="a" style="left:0;top:0;width:2px;height:18px;background:#000"></div></div>
<div class="sw" style="left:627px;top:191px;background:#fff;"><svg style="left:0;top:0" width="18.500" height="18" viewBox="0 0 18.500 18"><circle cx="2.00" cy="1.50" r="0.800" fill="#111"/><circle cx="5.70" cy="1.50" r="0.800" fill="#111"/><circle cx="9.40" cy="1.50" r="0.800" fill="#111"/><circle cx="13.10" cy="1.50" r="0.800" fill="#111"/><circle cx="16.80" cy="1.50" r="0.800" fill="#111"/><circle cx="3.85" cy="4.10" r="0.800" fill="#111"/><circle cx="7.55" cy="4.10" r="0.800" fill="#111"/><circle cx="11.25" cy="4.10" r="0.800" fill="#111"/><circle cx="14.95" cy="4.10" r="0.800" fill="#111"/><circle cx="18.65" cy="4.10" r="0.800" fill="#111"/><circle cx="2.00" cy="6.70" r="0.800" fill="#111"/><circle cx="5.70" cy="6.70" r="0.800" fill="#111"/><circle cx="9.40" cy="6.70" r="0.800" fill="#111"/><circle cx="13.10" cy="6.70" r="0.800" fill="#111"/><circle cx="16.80" cy="6.70" r="0.800" fill="#111"/><circle cx="3.85" cy="9.30" r="0.800" fill="#111"/><circle cx="7.55" cy="9.30" r="0.800" fill="#111"/><circle cx="11.25" cy="9.30" r="0.800" fill="#111"/><circle cx="14.95" cy="9.30" r="0.800" fill="#111"/><circle cx="18.65" cy="9.30" r="0.800" fill="#111"/><circle cx="2.00" cy="11.90" r="0.800" fill="#111"/><circle cx="5.70" cy="11.90" r="0.800" fill="#111"/><circle cx="9.40" cy="11.90" r="0.800" fill="#111"/><circle cx="13.10" cy="11.90" r="0.800" fill="#111"/><circle cx="16.80" cy="11.90" r="0.800" fill="#111"/><circle cx="3.85" cy="14.50" r="0.800" fill="#111"/><circle cx="7.55" cy="14.50" r="0.800" fill="#111"/><circle cx="11.25" cy="14.50" r="0.800" fill="#111"/><circle cx="14.95" cy="14.50" r="0.800" fill="#111"/><circle cx="18.65" cy="14.50" r="0.800" fill="#111"/><circle cx="2.00" cy="17.10" r="0.800" fill="#111"/><circle cx="5.70" cy="17.10" r="0.800" fill="#111"/><circle cx="9.40" cy="17.10" r="0.800" fill="#111"/><circle cx="13.10" cy="17.10" r="0.800" fill="#111"/><circle cx="16.80" cy="17.10" r="0.800" fill="#111"/></svg></div>
<div class="sw" style="left:648.8px;top:191px;background:#fff;"><svg style="left:0;top:0" width="18.500" height="18" viewBox="0 0 18.500 18"><path d="M3 15.500L15.500 3" stroke="#111" stroke-width="4.500"/></svg></div>
<div class="sw" style="left:539.3px;top:213px;background:#fbfbfb;"></div>
<div class="sw" style="left:561.2px;top:213px;background:#f9f9f9;"></div>
<div class="sw" style="left:583px;top:213px;background:#efefef;"><svg style="left:0;top:0;overflow:hidden" width="18.5" height="18" viewBox="0 0 18.5 18"><circle cx="8.4" cy="10.1" r="0.86" fill="#fafafa"/><circle cx="8.4" cy="15.4" r="0.49" fill="#dcdcdc"/><circle cx="8.8" cy="11.1" r="0.49" fill="#fafafa"/><circle cx="5.6" cy="1.6" r="0.80" fill="#dcdcdc"/><circle cx="11.7" cy="10.7" r="0.60" fill="#fafafa"/><circle cx="12.1" cy="11.1" r="0.48" fill="#e2e2e2"/><circle cx="15.4" cy="1.1" r="0.42" fill="#e2e2e2"/><circle cx="11.1" cy="14.0" r="0.56" fill="#dcdcdc"/><circle cx="15.6" cy="9.3" r="0.72" fill="#fafafa"/><circle cx="0.1" cy="1.5" r="0.73" fill="#fafafa"/><circle cx="18.5" cy="17.9" r="0.82" fill="#dcdcdc"/><circle cx="4.7" cy="13.6" r="0.66" fill="#e2e2e2"/><circle cx="1.3" cy="13.8" r="0.60" fill="#fafafa"/><circle cx="7.2" cy="17.2" r="0.82" fill="#e2e2e2"/><circle cx="3.9" cy="16.7" r="0.43" fill="#fafafa"/><circle cx="18.1" cy="7.2" r="0.44" fill="#dcdcdc"/><circle cx="3.7" cy="12.1" r="0.57" fill="#fafafa"/><circle cx="6.2" cy="17.4" r="0.78" fill="#e2e2e2"/><circle cx="2.5" cy="12.7" r="0.41" fill="#fafafa"/><circle cx="14.7" cy="3.2" r="0.68" fill="#fafafa"/><circle cx="9.4" cy="17.7" r="0.78" fill="#fafafa"/><circle cx="11.9" cy="2.1" r="0.61" fill="#e2e2e2"/><circle cx="0.0" cy="15.6" r="0.89" fill="#dcdcdc"/><circle cx="5.6" cy="15.9" r="0.51" fill="#fafafa"/><circle cx="18.4" cy="10.8" r="0.69" fill="#e2e2e2"/><circle cx="18.3" cy="3.8" r="0.53" fill="#dcdcdc"/><circle cx="6.1" cy="5.3" r="0.44" fill="#e2e2e2"/><circle cx="3.9" cy="11.5" r="0.41" fill="#fafafa"/><circle cx="6.9" cy="8.2" r="0.88" fill="#fafafa"/><circle cx="15.4" cy="2.4" r="0.59" fill="#dcdcdc"/><circle cx="2.9" cy="16.4" r="0.81" fill="#e2e2e2"/><circle cx="13.4" cy="2.9" r="0.71" fill="#dcdcdc"/><circle cx="3.6" cy="17.1" r="0.84" fill="#dcdcdc"/><circle cx="1.5" cy="0.9" r="0.45" fill="#dcdcdc"/><circle cx="17.8" cy="4.3" r="0.75" fill="#fafafa"/><circle cx="7.8" cy="16.3" r="0.65" fill="#dcdcdc"/><circle cx="3.2" cy="13.0" r="0.43" fill="#e2e2e2"/><circle cx="8.9" cy="11.8" r="0.71" fill="#e2e2e2"/><circle cx="5.2" cy="16.5" r="0.50" fill="#e2e2e2"/><circle cx="1.3" cy="7.4" r="0.52" fill="#e2e2e2"/><circle cx="3.3" cy="6.6" r="0.69" fill="#e2e2e2"/><circle cx="1.7" cy="2.5" r="0.63" fill="#fafafa"/><circle cx="12.2" cy="12.4" r="0.69" fill="#e2e2e2"/><circle cx="10.9" cy="16.6" r="0.64" fill="#fafafa"/><circle cx="13.0" cy="17.3" r="0.41" fill="#dcdcdc"/><circle cx="1.4" cy="1.2" r="0.56" fill="#e2e2e2"/><circle cx="18.5" cy="1.4" r="0.67" fill="#dcdcdc"/><circle cx="0.8" cy="16.9" r="0.77" fill="#e2e2e2"/><circle cx="14.7" cy="16.5" r="0.58" fill="#dcdcdc"/><circle cx="8.8" cy="1.4" r="0.83" fill="#e2e2e2"/><circle cx="16.0" cy="10.3" r="0.71" fill="#fafafa"/><circle cx="7.0" cy="0.2" r="0.44" fill="#e2e2e2"/><circle cx="11.8" cy="17.9" r="0.84" fill="#dcdcdc"/><circle cx="6.1" cy="16.8" r="0.75" fill="#fafafa"/><circle cx="8.1" cy="15.1" r="0.44" fill="#dcdcdc"/><circle cx="0.6" cy="10.8" r="0.64" fill="#e2e2e2"/><circle cx="17.7" cy="2.0" r="0.79" fill="#dcdcdc"/><circle cx="17.0" cy="4.6" r="0.41" fill="#fafafa"/><circle cx="2.6" cy="11.0" r="0.66" fill="#fafafa"/><circle cx="12.2" cy="8.0" r="0.85" fill="#fafafa"/></svg></div>
<div class="sw" style="left:605.2px;top:213px;background:#d6d6d6;"><svg style="left:0;top:0;overflow:hidden" width="18.5" height="18" viewBox="0 0 18.5 18"><circle cx="8.8" cy="11.8" r="0.57" fill="#ececec"/><circle cx="7.1" cy="17.9" r="0.49" fill="#a8a8a8"/><circle cx="12.8" cy="10.8" r="0.52" fill="#ececec"/><circle cx="18.1" cy="6.6" r="0.44" fill="#ececec"/><circle cx="1.1" cy="14.7" r="0.33" fill="#c4c4c4"/><circle cx="12.6" cy="14.4" r="0.33" fill="#b8b8b8"/><circle cx="15.2" cy="11.9" r="0.39" fill="#a8a8a8"/><circle cx="17.5" cy="2.0" r="0.47" fill="#ececec"/><circle cx="10.0" cy="15.9" r="0.52" fill="#b8b8b8"/><circle cx="10.3" cy="9.1" r="0.33" fill="#a8a8a8"/><circle cx="12.4" cy="8.5" r="0.54" fill="#b8b8b8"/><circle cx="11.9" cy="1.5" r="0.38" fill="#c4c4c4"/><circle cx="6.6" cy="6.5" r="0.58" fill="#c4c4c4"/><circle cx="2.1" cy="4.2" r="0.45" fill="#ececec"/><circle cx="0.5" cy="14.8" r="0.47" fill="#b8b8b8"/><circle cx="4.1" cy="7.7" r="0.46" fill="#b8b8b8"/><circle cx="13.9" cy="4.0" r="0.33" fill="#c4c4c4"/><circle cx="0.7" cy="5.0" r="0.44" fill="#b8b8b8"/><circle cx="9.5" cy="6.6" r="0.44" fill="#a8a8a8"/><circle cx="8.8" cy="17.3" r="0.49" fill="#ececec"/><circle cx="8.6" cy="9.9" r="0.37" fill="#ececec"/><circle cx="16.9" cy="0.1" r="0.41" fill="#c4c4c4"/><circle cx="3.3" cy="14.3" r="0.50" fill="#ececec"/><circle cx="11.5" cy="17.7" r="0.70" fill="#ececec"/><circle cx="0.4" cy="5.8" r="0.61" fill="#c4c4c4"/><circle cx="11.8" cy="4.1" r="0.51" fill="#a8a8a8"/><circle cx="9.1" cy="6.4" r="0.57" fill="#a8a8a8"/><circle cx="16.5" cy="2.9" r="0.42" fill="#b8b8b8"/><circle cx="5.1" cy="17.0" r="0.51" fill="#a8a8a8"/><circle cx="13.0" cy="3.9" r="0.41" fill="#c4c4c4"/><circle cx="0.5" cy="0.1" r="0.31" fill="#c4c4c4"/><circle cx="7.8" cy="4.3" r="0.47" fill="#b8b8b8"/><circle cx="10.4" cy="11.2" r="0.67" fill="#c4c4c4"/><circle cx="14.1" cy="7.5" r="0.54" fill="#a8a8a8"/><circle cx="14.6" cy="10.4" r="0.44" fill="#c4c4c4"/><circle cx="11.8" cy="6.9" r="0.36" fill="#ececec"/><circle cx="16.7" cy="14.4" r="0.66" fill="#a8a8a8"/><circle cx="9.9" cy="14.2" r="0.45" fill="#b8b8b8"/><circle cx="13.1" cy="3.4" r="0.41" fill="#a8a8a8"/><circle cx="11.5" cy="2.2" r="0.51" fill="#a8a8a8"/><circle cx="10.7" cy="1.3" r="0.44" fill="#b8b8b8"/><circle cx="12.7" cy="2.6" r="0.34" fill="#c4c4c4"/><circle cx="5.7" cy="3.2" r="0.57" fill="#a8a8a8"/><circle cx="6.8" cy="0.5" r="0.50" fill="#a8a8a8"/><circle cx="9.0" cy="1.0" r="0.54" fill="#a8a8a8"/><circle cx="4.4" cy="5.9" r="0.68" fill="#b8b8b8"/><circle cx="17.8" cy="6.6" r="0.64" fill="#a8a8a8"/><circle cx="5.5" cy="9.3" r="0.36" fill="#c4c4c4"/><circle cx="3.0" cy="8.4" r="0.54" fill="#ececec"/><circle cx="8.5" cy="14.1" r="0.32" fill="#ececec"/><circle cx="7.5" cy="12.6" r="0.62" fill="#a8a8a8"/><circle cx="12.3" cy="17.5" r="0.52" fill="#c4c4c4"/><circle cx="6.5" cy="13.2" r="0.43" fill="#a8a8a8"/><circle cx="16.6" cy="11.4" r="0.37" fill="#a8a8a8"/><circle cx="4.2" cy="9.8" r="0.40" fill="#b8b8b8"/><circle cx="7.9" cy="6.6" r="0.46" fill="#c4c4c4"/><circle cx="7.2" cy="15.7" r="0.66" fill="#c4c4c4"/><circle cx="2.7" cy="4.7" r="0.31" fill="#a8a8a8"/><circle cx="7.6" cy="11.1" r="0.41" fill="#a8a8a8"/><circle cx="14.2" cy="8.9" r="0.68" fill="#ececec"/><circle cx="3.1" cy="3.7" r="0.40" fill="#c4c4c4"/><circle cx="9.7" cy="1.0" r="0.63" fill="#c4c4c4"/><circle cx="18.1" cy="16.5" r="0.61" fill="#c4c4c4"/><circle cx="15.4" cy="3.8" r="0.65" fill="#b8b8b8"/><circle cx="10.3" cy="0.8" r="0.62" fill="#ececec"/><circle cx="3.0" cy="12.9" r="0.42" fill="#ececec"/><circle cx="18.2" cy="13.9" r="0.52" fill="#b8b8b8"/><circle cx="11.2" cy="1.8" r="0.57" fill="#ececec"/><circle cx="8.3" cy="9.5" r="0.56" fill="#a8a8a8"/><circle cx="9.3" cy="11.4" r="0.49" fill="#a8a8a8"/><circle cx="15.8" cy="16.1" r="0.31" fill="#c4c4c4"/><circle cx="0.4" cy="2.8" r="0.60" fill="#c4c4c4"/><circle cx="12.8" cy="17.2" r="0.57" fill="#a8a8a8"/><circle cx="10.2" cy="17.3" r="0.45" fill="#b8b8b8"/><circle cx="15.5" cy="2.3" r="0.32" fill="#b8b8b8"/><circle cx="7.8" cy="14.5" r="0.63" fill="#ececec"/><circle cx="0.6" cy="12.4" r="0.53" fill="#b8b8b8"/><circle cx="11.0" cy="10.6" r="0.62" fill="#ececec"/><circle cx="8.5" cy="6.1" r="0.56" fill="#c4c4c4"/><circle cx="14.8" cy="7.0" r="0.56" fill="#c4c4c4"/><circle cx="17.6" cy="17.8" r="0.61" fill="#c4c4c4"/><circle cx="2.6" cy="2.2" r="0.49" fill="#ececec"/><circle cx="12.4" cy="0.2" r="0.39" fill="#a8a8a8"/><circle cx="8.1" cy="6.1" r="0.46" fill="#c4c4c4"/><circle cx="6.3" cy="6.9" r="0.64" fill="#a8a8a8"/><circle cx="6.3" cy="16.0" r="0.55" fill="#c4c4c4"/><circle cx="1.2" cy="6.1" r="0.41" fill="#ececec"/><circle cx="15.5" cy="12.0" r="0.48" fill="#c4c4c4"/><circle cx="4.7" cy="7.5" r="0.34" fill="#a8a8a8"/><circle cx="3.2" cy="9.9" r="0.54" fill="#c4c4c4"/></svg></div>
<div class="sw" style="left:627px;top:213px;background:#7e7e7e;border:1px solid #dcdcdc;"><div class="a" style="left:2px;top:2px;width:14.500px;height:14px;border:1.500px solid #e2e2e2"></div><div class="a" style="left:5px;top:5px;width:8.500px;height:8px;border:1.500px solid #e2e2e2"></div><div class="a" style="left:8px;top:7.800px;width:2.500px;height:2.500px;background:#e2e2e2"></div></div>
<div class="a" style="left:647.3px;top:211.5px;width:21.500px;height:21px;border:1px solid #3a9bd6"></div>
<div class="sw" style="left:648.8px;top:213px;background:#fff;"><svg style="left:0;top:0;overflow:hidden" width="18.500" height="18" viewBox="0 0 43 41.500" preserveAspectRatio="none"><use href="#swt"/></svg></div>
<div class="sw" style="left:539.3px;top:235px;background:#2b0c9e;"><svg style="left:0;top:0;overflow:hidden" width="18.5" height="18" viewBox="0 0 18.5 18"><circle cx="4.8" cy="12.3" r="1.22" fill="#1c0578"/><circle cx="12.1" cy="12.0" r="1.38" fill="#1c0578"/><circle cx="2.4" cy="9.6" r="0.79" fill="#3a14b4"/><circle cx="0.6" cy="2.3" r="1.22" fill="#4a22c8"/><circle cx="18.4" cy="15.0" r="0.68" fill="#3a14b4"/><circle cx="15.3" cy="13.4" r="1.45" fill="#3a14b4"/><circle cx="6.6" cy="4.2" r="1.41" fill="#5a30d0"/><circle cx="12.4" cy="16.0" r="1.17" fill="#4a22c8"/><circle cx="6.4" cy="10.7" r="1.17" fill="#3a14b4"/><circle cx="12.8" cy="10.0" r="1.27" fill="#1c0578"/><circle cx="8.1" cy="13.1" r="1.08" fill="#3a14b4"/><circle cx="3.7" cy="9.4" r="0.83" fill="#5a30d0"/><circle cx="4.8" cy="5.0" r="1.40" fill="#5a30d0"/><circle cx="10.2" cy="10.2" r="1.40" fill="#3a14b4"/><circle cx="2.4" cy="7.7" r="1.17" fill="#5a30d0"/><circle cx="7.2" cy="12.9" r="1.44" fill="#4a22c8"/><circle cx="4.2" cy="9.0" r="1.23" fill="#5a30d0"/><circle cx="11.8" cy="2.9" r="0.97" fill="#3a14b4"/><circle cx="16.4" cy="14.5" r="0.78" fill="#3a14b4"/><circle cx="9.6" cy="11.8" r="1.41" fill="#1c0578"/><circle cx="13.4" cy="3.8" r="1.16" fill="#4a22c8"/><circle cx="6.6" cy="13.1" r="0.91" fill="#3a14b4"/><circle cx="3.6" cy="14.2" r="1.10" fill="#1c0578"/><circle cx="3.1" cy="7.7" r="1.14" fill="#4a22c8"/><circle cx="18.0" cy="14.9" r="1.18" fill="#4a22c8"/><circle cx="2.3" cy="5.6" r="0.97" fill="#3a14b4"/><circle cx="10.5" cy="12.6" r="1.44" fill="#3a14b4"/><circle cx="15.8" cy="0.6" r="0.89" fill="#1c0578"/><circle cx="9.2" cy="17.5" r="1.07" fill="#5a30d0"/><circle cx="4.1" cy="3.7" r="1.32" fill="#5a30d0"/><circle cx="9.3" cy="16.4" r="1.26" fill="#3a14b4"/><circle cx="7.9" cy="14.8" r="0.79" fill="#5a30d0"/><circle cx="10.9" cy="6.4" r="0.82" fill="#3a14b4"/><circle cx="7.9" cy="11.5" r="0.98" fill="#3a14b4"/><circle cx="7.4" cy="1.6" r="1.28" fill="#4a22c8"/><circle cx="12.1" cy="5.5" r="1.00" fill="#5a30d0"/><circle cx="6.2" cy="5.2" r="0.99" fill="#1c0578"/><circle cx="2.7" cy="0.9" r="0.93" fill="#1c0578"/><circle cx="4.0" cy="5.5" r="0.95" fill="#4a22c8"/><circle cx="6.4" cy="1.8" r="1.04" fill="#5a30d0"/><circle cx="0.8" cy="9.6" r="0.72" fill="#4a22c8"/><circle cx="6.0" cy="16.1" r="1.09" fill="#1c0578"/><circle cx="16.7" cy="16.1" r="1.42" fill="#1c0578"/><circle cx="1.7" cy="16.8" r="0.66" fill="#3a14b4"/><circle cx="14.8" cy="3.8" r="1.25" fill="#1c0578"/><circle cx="9.6" cy="16.6" r="1.00" fill="#5a30d0"/><circle cx="11.5" cy="15.1" r="1.41" fill="#4a22c8"/><circle cx="11.3" cy="17.0" r="1.28" fill="#3a14b4"/><circle cx="9.9" cy="5.4" r="1.47" fill="#3a14b4"/><circle cx="4.8" cy="6.7" r="1.44" fill="#1c0578"/></svg></div>
<div class="sw" style="left:561.2px;top:235px;background:#cfc820;"><svg style="left:0;top:0;overflow:hidden" width="18.5" height="18" viewBox="0 0 18.5 18"><circle cx="2.0" cy="12.6" r="0.79" fill="#e8e040"/><circle cx="5.0" cy="4.6" r="0.84" fill="#b0a818"/><circle cx="5.6" cy="12.3" r="0.64" fill="#6a640c"/><circle cx="4.9" cy="15.7" r="0.59" fill="#8a8410"/><circle cx="6.7" cy="11.4" r="0.71" fill="#e8e040"/><circle cx="10.2" cy="12.0" r="0.50" fill="#6a640c"/><circle cx="2.3" cy="6.1" r="0.45" fill="#e8e040"/><circle cx="15.8" cy="6.9" r="0.75" fill="#b0a818"/><circle cx="16.6" cy="1.7" r="0.78" fill="#6a640c"/><circle cx="10.7" cy="11.5" r="0.62" fill="#6a640c"/><circle cx="13.8" cy="8.8" r="0.80" fill="#8a8410"/><circle cx="8.4" cy="3.9" r="0.88" fill="#8a8410"/><circle cx="1.9" cy="14.7" r="0.45" fill="#8a8410"/><circle cx="2.2" cy="2.9" r="0.65" fill="#6a640c"/><circle cx="7.9" cy="17.5" r="0.50" fill="#b0a818"/><circle cx="8.4" cy="8.7" r="0.66" fill="#6a640c"/><circle cx="4.7" cy="7.1" r="0.67" fill="#b0a818"/><circle cx="1.2" cy="2.6" r="0.82" fill="#b0a818"/><circle cx="0.4" cy="12.7" r="0.97" fill="#b0a818"/><circle cx="0.4" cy="12.8" r="0.62" fill="#b0a818"/><circle cx="4.9" cy="5.4" r="0.51" fill="#b0a818"/><circle cx="14.8" cy="1.7" r="0.46" fill="#e8e040"/><circle cx="5.8" cy="17.7" r="0.75" fill="#8a8410"/><circle cx="9.6" cy="14.5" r="0.99" fill="#6a640c"/><circle cx="0.7" cy="2.6" r="0.52" fill="#e8e040"/><circle cx="4.6" cy="9.0" r="0.51" fill="#e8e040"/><circle cx="11.2" cy="16.5" r="0.57" fill="#8a8410"/><circle cx="0.6" cy="16.6" r="0.84" fill="#e8e040"/><circle cx="9.4" cy="15.1" r="0.62" fill="#b0a818"/><circle cx="4.5" cy="7.0" r="0.73" fill="#8a8410"/><circle cx="9.0" cy="17.1" r="0.42" fill="#b0a818"/><circle cx="8.7" cy="6.1" r="0.56" fill="#6a640c"/><circle cx="2.4" cy="1.0" r="0.96" fill="#e8e040"/><circle cx="4.8" cy="8.1" r="0.73" fill="#b0a818"/><circle cx="0.9" cy="1.9" r="0.82" fill="#b0a818"/><circle cx="7.7" cy="8.0" r="0.45" fill="#e8e040"/><circle cx="2.7" cy="12.0" r="0.53" fill="#8a8410"/><circle cx="18.4" cy="10.7" r="0.89" fill="#6a640c"/><circle cx="10.7" cy="8.4" r="0.98" fill="#8a8410"/><circle cx="17.3" cy="15.6" r="0.44" fill="#6a640c"/><circle cx="17.0" cy="1.2" r="0.90" fill="#6a640c"/><circle cx="16.2" cy="14.9" r="0.96" fill="#6a640c"/><circle cx="0.0" cy="12.2" r="0.43" fill="#b0a818"/><circle cx="16.4" cy="2.7" r="0.93" fill="#b0a818"/><circle cx="14.5" cy="8.9" r="0.72" fill="#8a8410"/><circle cx="1.5" cy="4.9" r="0.57" fill="#6a640c"/><circle cx="10.1" cy="14.3" r="0.83" fill="#6a640c"/><circle cx="17.2" cy="16.2" r="0.91" fill="#b0a818"/><circle cx="7.1" cy="5.3" r="0.83" fill="#8a8410"/><circle cx="0.5" cy="2.5" r="0.97" fill="#8a8410"/><circle cx="17.9" cy="9.4" r="0.90" fill="#b0a818"/><circle cx="0.5" cy="11.6" r="1.00" fill="#8a8410"/><circle cx="10.7" cy="14.3" r="0.65" fill="#b0a818"/><circle cx="18.0" cy="14.1" r="0.63" fill="#b0a818"/><circle cx="4.5" cy="14.7" r="0.98" fill="#e8e040"/><circle cx="15.3" cy="3.5" r="0.91" fill="#6a640c"/><circle cx="4.6" cy="1.6" r="0.92" fill="#6a640c"/><circle cx="0.5" cy="12.2" r="0.81" fill="#8a8410"/><circle cx="14.3" cy="7.6" r="0.53" fill="#6a640c"/><circle cx="11.6" cy="12.7" r="0.51" fill="#8a8410"/><circle cx="8.5" cy="3.6" r="0.46" fill="#8a8410"/><circle cx="8.7" cy="13.6" r="0.61" fill="#b0a818"/><circle cx="9.9" cy="17.6" r="0.43" fill="#b0a818"/><circle cx="2.5" cy="15.4" r="0.56" fill="#8a8410"/><circle cx="9.9" cy="2.8" r="0.71" fill="#8a8410"/><circle cx="9.0" cy="11.4" r="0.62" fill="#e8e040"/><circle cx="2.4" cy="18.0" r="0.53" fill="#6a640c"/><circle cx="18.4" cy="15.8" r="0.54" fill="#8a8410"/><circle cx="15.7" cy="10.6" r="0.89" fill="#8a8410"/><circle cx="3.3" cy="4.4" r="0.92" fill="#8a8410"/></svg></div>
<svg style="left:689.500px;top:192.500px" width="8" height="8" viewBox="0 0 8 8"><circle cx="4" cy="4" r="2.300" fill="none" stroke="#d8d8d8" stroke-width="1.500"/><path d="M4 0V8M0 4H8M1.200 1.200L6.800 6.800M6.800 1.200L1.200 6.800" stroke="#d8d8d8" stroke-width="1.100"/><circle cx="4" cy="4" r="1" fill="#535353"/></svg>
<div class="a" style="left:698.500px;top:199px;width:1.500px;height:1.500px;background:#d8d8d8"></div>
<svg style="left:700px;top:275px" width="8" height="8" viewBox="0 0 8 8"><path d="M7 1L1 7M7 4L4 7" stroke="#606060" stroke-width="1"/></svg>
<div class="btn" style="top:85.500px;border-color:#cfcfcf">OK</div>
<div class="btn" style="top:110px;">Cancel</div>
<div class="btn" style="top:134px;">New Style...</div>
<div class="a" style="left:816px;top:159px;width:8px;height:8px;background:#f4f4f4;border-radius:1.500px"></div>
<svg style="left:817px;top:160px" width="6" height="6" viewBox="0 0 6 6"><path d="M0.800 3L2.400 4.600L5.200 1" fill="none" stroke="#222" stroke-width="1.200"/></svg>
<div class="t" style="left:829px;top:157.500px;font-size:8.200px;line-height:11px;height:11px;color:#e8e8e8">Preview</div>
<div class="a" style="left:797px;top:176px;width:88.500px;height:87.800px;background:#2c2c2c"></div>
<svg style="left:819px;top:197.700px" width="44" height="44.300"><rect width="44" height="44.3" fill="url(#pt2)"/></svg>
</div></body></html>
